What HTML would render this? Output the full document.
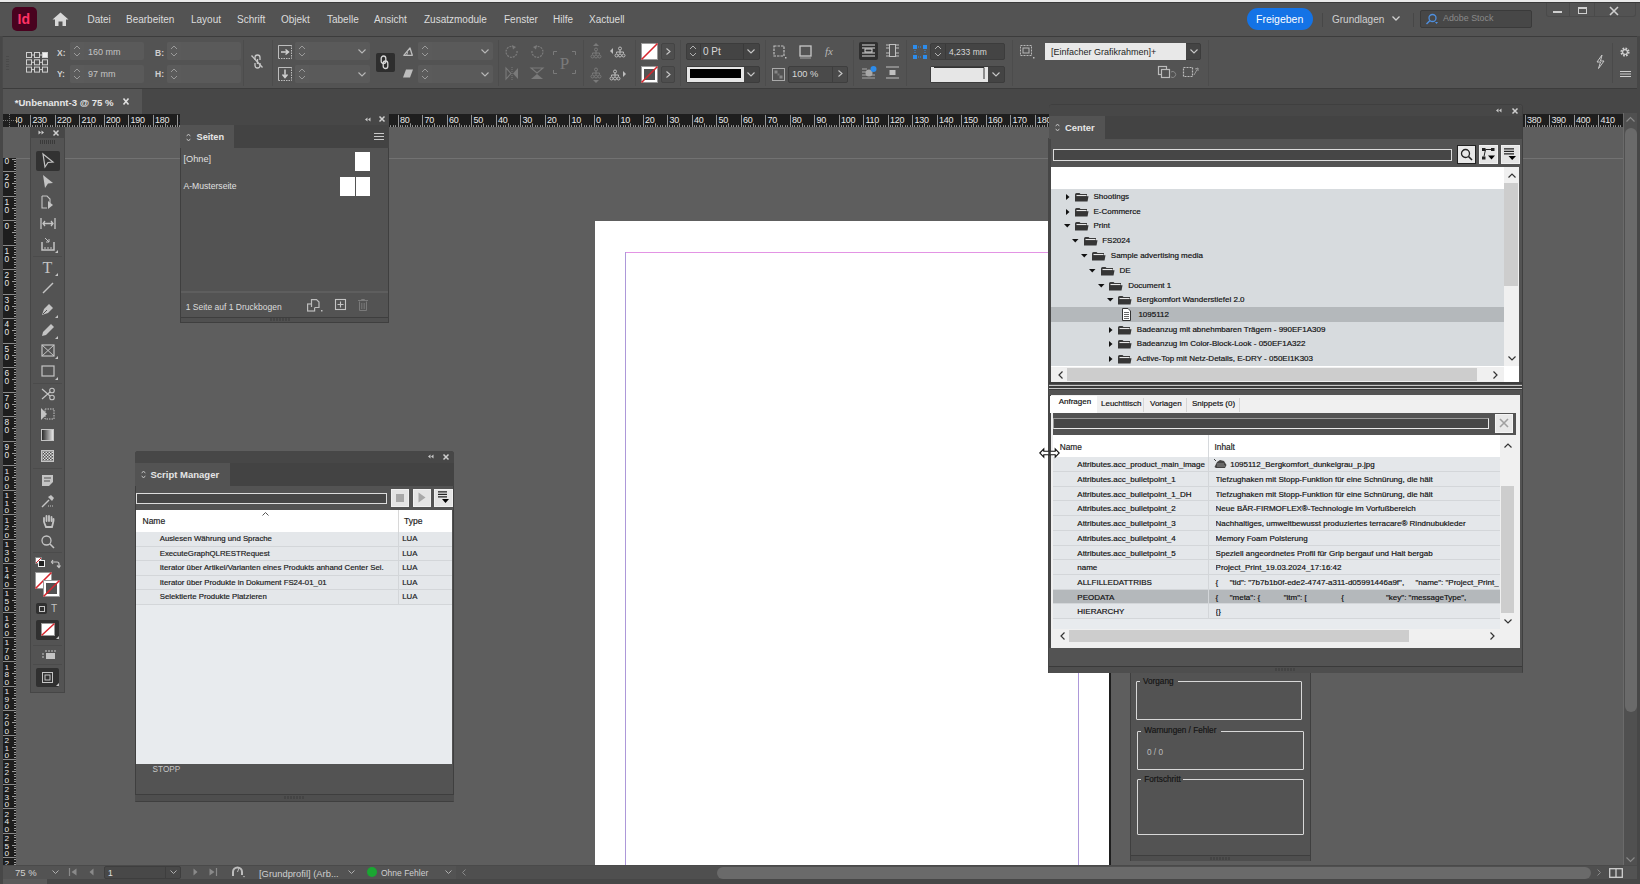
<!DOCTYPE html><html><head><meta charset="utf-8"><style>
*{box-sizing:border-box;margin:0;padding:0}
html,body{width:1640px;height:884px;overflow:hidden;background:#5e5e5e;font-family:"Liberation Sans",sans-serif;}
.ab{position:absolute}
.t{position:absolute;white-space:nowrap;line-height:1}
.dk{-webkit-text-stroke:0.18px currentColor}
svg{position:absolute;overflow:visible}
</style></head><body>
<div class="ab" style="left:0px;top:0px;width:1640px;height:2px;background:#e9e9e9;"></div>
<div class="ab" style="left:0px;top:2px;width:1640px;height:1px;background:#3a3a3a;"></div>
<div class="ab" style="left:0px;top:3px;width:1640px;height:33px;background:#535353;"></div>
<div class="ab" style="left:12px;top:7px;width:25px;height:24px;background:#49021f;border-radius:5px"></div>
<div class="t" style="left:17.5px;top:12px;font-size:14px;color:#ff3366;font-weight:bold;">Id</div>
<svg style="left:52px;top:12px;" width="17" height="15" viewBox="0 0 17 15"><path d="M8.5 0.5 L16.5 7.5 L14 7.5 L14 14 L10.5 14 L10.5 9.5 L6.5 9.5 L6.5 14 L3 14 L3 7.5 L0.5 7.5 Z" fill="#d8d8d8"/></svg>
<div class="t" style="left:87.5px;top:14.5px;font-size:10px;color:#dcdcdc;">Datei</div>
<div class="t" style="left:126px;top:14.5px;font-size:10px;color:#dcdcdc;">Bearbeiten</div>
<div class="t" style="left:191px;top:14.5px;font-size:10px;color:#dcdcdc;">Layout</div>
<div class="t" style="left:237px;top:14.5px;font-size:10px;color:#dcdcdc;">Schrift</div>
<div class="t" style="left:281px;top:14.5px;font-size:10px;color:#dcdcdc;">Objekt</div>
<div class="t" style="left:327px;top:14.5px;font-size:10px;color:#dcdcdc;">Tabelle</div>
<div class="t" style="left:374px;top:14.5px;font-size:10px;color:#dcdcdc;">Ansicht</div>
<div class="t" style="left:424px;top:14.5px;font-size:10px;color:#dcdcdc;">Zusatzmodule</div>
<div class="t" style="left:504px;top:14.5px;font-size:10px;color:#dcdcdc;">Fenster</div>
<div class="t" style="left:553px;top:14.5px;font-size:10px;color:#dcdcdc;">Hilfe</div>
<div class="t" style="left:589px;top:14.5px;font-size:10px;color:#dcdcdc;">Xactuell</div>
<div class="ab" style="left:1247px;top:8px;width:66px;height:22px;background:#1473e6;border-radius:11px"></div>
<div class="t" style="left:1256px;top:14px;font-size:10.5px;color:#ffffff;">Freigeben</div>
<div class="ab" style="left:1322px;top:13px;width:1px;height:14px;background:#474747;"></div>
<div class="t" style="left:1332px;top:14.5px;font-size:10px;color:#d0d0d0;">Grundlagen</div>
<svg style="left:1392px;top:16px;" width="8" height="5" viewBox="0 0 8 5"><path d="M0.5 0.5 L4 4 L7.5 0.5" stroke="#d0d0d0" stroke-width="1.3" fill="none"/></svg>
<div class="ab" style="left:1413px;top:13px;width:1px;height:14px;background:#474747;"></div>
<div class="ab" style="left:1420px;top:10px;width:112px;height:18px;background:#474747;border:1px solid #3a3a3a;border-radius:2px"></div>
<svg style="left:1425px;top:13px;" width="14" height="12" viewBox="0 0 14 12"><circle cx="7.5" cy="5" r="3.5" stroke="#4f8fde" stroke-width="1.3" fill="none"/><path d="M5 7.5 L1.5 11" stroke="#4f8fde" stroke-width="1.5"/><path d="M10 9 L13 9 L11.5 11 Z" fill="#4f8fde"/></svg>
<div class="t" style="left:1443px;top:14px;font-size:8.9px;color:#8a8a8a;">Adobe Stock</div>
<div class="ab" style="left:1546px;top:3px;width:90px;height:14px;background:#535353;border:1px solid #4a4a4a;border-top:none;border-radius:0 0 3px 3px"></div>
<div class="ab" style="left:1569px;top:3px;width:1px;height:14px;background:#4a4a4a;"></div>
<div class="ab" style="left:1594px;top:3px;width:1px;height:14px;background:#4a4a4a;"></div>
<div class="ab" style="left:1553px;top:11px;width:9px;height:2px;background:#cfcfcf;"></div>
<div class="ab" style="left:1578px;top:7px;width:9px;height:7px;background:transparent;border:1.5px solid #cfcfcf;border-top-width:2px"></div>
<svg style="left:1609px;top:6px;" width="10" height="10" viewBox="0 0 10 10"><path d="M1 1 L9 9 M9 1 L1 9" stroke="#cfcfcf" stroke-width="1.6"/></svg>
<div class="ab" style="left:0px;top:36px;width:1640px;height:53px;background:#474747;"></div>
<div class="ab" style="left:2px;top:36px;width:1635px;height:53px;background:#535353;border-top:1px solid #3c3c3c;border-left:1px solid #4a4a4a;border-bottom:1px solid #3c3c3c"></div>
<div class="ab" style="left:6px;top:56.0px;width:3px;height:1px;background:#4a4a4a;"></div>
<div class="ab" style="left:6px;top:58.6px;width:3px;height:1px;background:#4a4a4a;"></div>
<div class="ab" style="left:6px;top:61.2px;width:3px;height:1px;background:#4a4a4a;"></div>
<div class="ab" style="left:6px;top:63.8px;width:3px;height:1px;background:#4a4a4a;"></div>
<div class="ab" style="left:6px;top:66.4px;width:3px;height:1px;background:#4a4a4a;"></div>
<div class="ab" style="left:6px;top:69.0px;width:3px;height:1px;background:#4a4a4a;"></div>
<svg style="left:26px;top:52px;" width="22" height="22" viewBox="0 0 22 22"><rect x="0.5" y="0.5" width="5" height="5" fill="none" stroke="#cfcfcf" stroke-width="1"/><rect x="8.5" y="0.5" width="5" height="5" fill="none" stroke="#cfcfcf" stroke-width="1"/><rect x="16.5" y="0.5" width="5" height="5" fill="#f0f0f0" stroke="#cfcfcf" stroke-width="1"/><rect x="0.5" y="7.8" width="5" height="5" fill="none" stroke="#cfcfcf" stroke-width="1"/><rect x="8.5" y="7.8" width="5" height="5" fill="none" stroke="#cfcfcf" stroke-width="1"/><rect x="16.5" y="7.8" width="5" height="5" fill="none" stroke="#cfcfcf" stroke-width="1"/><rect x="0.5" y="15.1" width="5" height="5" fill="none" stroke="#cfcfcf" stroke-width="1"/><rect x="8.5" y="15.1" width="5" height="5" fill="none" stroke="#cfcfcf" stroke-width="1"/><rect x="16.5" y="15.1" width="5" height="5" fill="none" stroke="#cfcfcf" stroke-width="1"/><path d="M5.5 3 H8.5 M13.5 3 H16.5 M5.5 10.3 H8.5 M13.5 10.3 H16.5 M5.5 17.6 H8.5 M13.5 17.6 H16.5" stroke="#cfcfcf" stroke-width="1"/></svg>
<div class="t" style="left:57px;top:49px;font-size:8.5px;color:#cfcfcf;font-weight:bold">X:</div>
<div class="t" style="left:57px;top:70px;font-size:8.5px;color:#cfcfcf;font-weight:bold">Y:</div>
<div class="ab" style="left:69.5px;top:42px;width:74px;height:18px;background:#5a5a5a;border-radius:2px"></div>
<div class="ab" style="left:69.5px;top:42px;width:14px;height:18px;background:#5b5b5b;border-radius:2px 0 0 2px"></div>
<svg style="left:72.5px;top:45px;" width="8" height="12" viewBox="0 0 8 12"><path d="M1 4 L4 1 L7 4 M1 8 L4 11 L7 8" stroke="#9a9a9a" stroke-width="1" fill="none"/></svg>
<div class="ab" style="left:69.5px;top:65px;width:74px;height:18px;background:#5a5a5a;border-radius:2px"></div>
<div class="ab" style="left:69.5px;top:65px;width:14px;height:18px;background:#5b5b5b;border-radius:2px 0 0 2px"></div>
<svg style="left:72.5px;top:68px;" width="8" height="12" viewBox="0 0 8 12"><path d="M1 4 L4 1 L7 4 M1 8 L4 11 L7 8" stroke="#9a9a9a" stroke-width="1" fill="none"/></svg>
<div class="t" style="left:88px;top:47.5px;font-size:9px;color:#c4c4c4;">160 mm</div>
<div class="t" style="left:88px;top:69.5px;font-size:9px;color:#c4c4c4;">97 mm</div>
<div class="t" style="left:155px;top:49px;font-size:8.5px;color:#cfcfcf;font-weight:bold">B:</div>
<div class="t" style="left:155px;top:70px;font-size:8.5px;color:#cfcfcf;font-weight:bold">H:</div>
<div class="ab" style="left:167px;top:42px;width:74px;height:18px;background:#5a5a5a;border-radius:2px"></div>
<div class="ab" style="left:167px;top:42px;width:14px;height:18px;background:#5b5b5b;border-radius:2px 0 0 2px"></div>
<svg style="left:170px;top:45px;" width="8" height="12" viewBox="0 0 8 12"><path d="M1 4 L4 1 L7 4 M1 8 L4 11 L7 8" stroke="#9a9a9a" stroke-width="1" fill="none"/></svg>
<div class="ab" style="left:167px;top:65px;width:74px;height:18px;background:#5a5a5a;border-radius:2px"></div>
<div class="ab" style="left:167px;top:65px;width:14px;height:18px;background:#5b5b5b;border-radius:2px 0 0 2px"></div>
<svg style="left:170px;top:68px;" width="8" height="12" viewBox="0 0 8 12"><path d="M1 4 L4 1 L7 4 M1 8 L4 11 L7 8" stroke="#9a9a9a" stroke-width="1" fill="none"/></svg>
<div class="ab" style="left:243px;top:40px;width:1px;height:46px;background:#4c4c4c;"></div>
<svg style="left:250px;top:54px;" width="14" height="15" viewBox="0 0 14 15"><g fill="none" stroke="#c8c8c8" stroke-width="1.3"><path d="M5 6 V3.5 A2.5 2.5 0 0 1 10 3.5 V6"/><path d="M5 9 V11.5 A2.5 2.5 0 0 0 10 11.5 V9"/><path d="M7.5 5 V10"/></g><path d="M1.5 1.5 L12.5 13.5" stroke="#c8c8c8" stroke-width="1.3"/></svg>
<div class="ab" style="left:272px;top:40px;width:1px;height:46px;background:#4c4c4c;"></div>
<svg style="left:278px;top:45px;" width="14" height="14" viewBox="0 0 14 14"><rect x="0.5" y="0.5" width="13" height="13" fill="none" stroke="#bdbdbd" stroke-dasharray="1.5 1" /><path d="M0.5 0.5 H13.5 M0.5 0.5 V13.5" stroke="#bdbdbd"/><path d="M3 7 H10 M7.5 4.5 L10.5 7 L7.5 9.5" stroke="#d0d0d0" stroke-width="1.5" fill="none"/></svg>
<svg style="left:278px;top:67px;" width="14" height="14" viewBox="0 0 14 14"><rect x="0.5" y="0.5" width="13" height="13" fill="none" stroke="#bdbdbd" stroke-dasharray="1.5 1" /><path d="M0.5 0.5 H13.5 M0.5 0.5 V13.5" stroke="#bdbdbd"/><path d="M7 2.5 V10 M4.5 7.5 L7 10.5 L9.5 7.5" stroke="#d0d0d0" stroke-width="1.5" fill="none"/></svg>
<div class="ab" style="left:295px;top:42px;width:75px;height:18px;background:#5a5a5a;border-radius:2px"></div>
<div class="ab" style="left:295px;top:42px;width:14px;height:18px;background:#5b5b5b;border-radius:2px 0 0 2px"></div>
<svg style="left:298px;top:45px;" width="8" height="12" viewBox="0 0 8 12"><path d="M1 4 L4 1 L7 4 M1 8 L4 11 L7 8" stroke="#9a9a9a" stroke-width="1" fill="none"/></svg>
<svg style="left:358px;top:49px;" width="8" height="5" viewBox="0 0 8 5"><path d="M0.5 0.5 L4 4 L7.5 0.5" stroke="#b8b8b8" stroke-width="1.1" fill="none"/></svg>
<div class="ab" style="left:295px;top:65px;width:75px;height:18px;background:#5a5a5a;border-radius:2px"></div>
<div class="ab" style="left:295px;top:65px;width:14px;height:18px;background:#5b5b5b;border-radius:2px 0 0 2px"></div>
<svg style="left:298px;top:68px;" width="8" height="12" viewBox="0 0 8 12"><path d="M1 4 L4 1 L7 4 M1 8 L4 11 L7 8" stroke="#9a9a9a" stroke-width="1" fill="none"/></svg>
<svg style="left:358px;top:72px;" width="8" height="5" viewBox="0 0 8 5"><path d="M0.5 0.5 L4 4 L7.5 0.5" stroke="#b8b8b8" stroke-width="1.1" fill="none"/></svg>
<div class="ab" style="left:375.5px;top:53px;width:19px;height:19px;background:#2e2e2e;border-radius:2px"></div>
<svg style="left:380px;top:55px;" width="9" height="15" viewBox="0 0 9 15"><g fill="none" stroke="#d8d8d8" stroke-width="1.3"><rect x="1.2" y="1" width="4.6" height="7.5" rx="2.3"/><rect x="3.2" y="6" width="4.6" height="7.5" rx="2.3"/></g></svg>
<svg style="left:403px;top:46.5px;" width="10" height="9" viewBox="0 0 10 9"><path d="M0.8 8.3 L7 1 L9.3 8.3 Z" stroke="#bdbdbd" stroke-width="1.3" fill="none" stroke-linejoin="round"/><path d="M3.5 8.3 Q4.8 6.2 4.3 5" stroke="#bdbdbd" stroke-width="1" fill="none"/></svg>
<svg style="left:403px;top:69px;" width="10" height="9" viewBox="0 0 10 9"><path d="M3 0.5 H10 L7 8.5 H0 Z" fill="#bdbdbd"/></svg>
<div class="ab" style="left:418px;top:42px;width:75px;height:18px;background:#5a5a5a;border-radius:2px"></div>
<div class="ab" style="left:418px;top:42px;width:14px;height:18px;background:#5b5b5b;border-radius:2px 0 0 2px"></div>
<svg style="left:421px;top:45px;" width="8" height="12" viewBox="0 0 8 12"><path d="M1 4 L4 1 L7 4 M1 8 L4 11 L7 8" stroke="#9a9a9a" stroke-width="1" fill="none"/></svg>
<svg style="left:481px;top:49px;" width="8" height="5" viewBox="0 0 8 5"><path d="M0.5 0.5 L4 4 L7.5 0.5" stroke="#b8b8b8" stroke-width="1.1" fill="none"/></svg>
<div class="ab" style="left:418px;top:65px;width:75px;height:18px;background:#5a5a5a;border-radius:2px"></div>
<div class="ab" style="left:418px;top:65px;width:14px;height:18px;background:#5b5b5b;border-radius:2px 0 0 2px"></div>
<svg style="left:421px;top:68px;" width="8" height="12" viewBox="0 0 8 12"><path d="M1 4 L4 1 L7 4 M1 8 L4 11 L7 8" stroke="#9a9a9a" stroke-width="1" fill="none"/></svg>
<svg style="left:481px;top:72px;" width="8" height="5" viewBox="0 0 8 5"><path d="M0.5 0.5 L4 4 L7.5 0.5" stroke="#b8b8b8" stroke-width="1.1" fill="none"/></svg>
<div class="ab" style="left:497.5px;top:40px;width:1px;height:46px;background:#4c4c4c;"></div>
<svg style="left:505px;top:45px;" width="14" height="14" viewBox="0 0 14 14"><path d="M12 6 A5.5 5.5 0 1 1 8 1.5" stroke="#7a7a7a" stroke-width="1.3" fill="none" stroke-dasharray="2 1"/><path d="M7 0 L11 2 L8 4.5" fill="#7a7a7a"/></svg>
<svg style="left:530px;top:45px;" width="14" height="14" viewBox="0 0 14 14"><path d="M2 6 A5.5 5.5 0 1 0 6 1.5" stroke="#7a7a7a" stroke-width="1.3" fill="none" stroke-dasharray="2 1"/><path d="M7 0 L3 2 L6 4.5" fill="#7a7a7a"/></svg>
<svg style="left:505px;top:67px;" width="14" height="13" viewBox="0 0 14 13"><path d="M1 1 L6 6.5 L1 12 Z" fill="none" stroke="#7a7a7a" stroke-width="1.1"/><path d="M13 1 L8 6.5 L13 12 Z" fill="#7a7a7a"/><path d="M7 0 V13" stroke="#7a7a7a" stroke-dasharray="1 1"/></svg>
<svg style="left:530px;top:67px;" width="14" height="13" viewBox="0 0 14 13"><path d="M1 1 L13 1 L7 6 Z" fill="none" stroke="#7a7a7a" stroke-width="1.1"/><path d="M1 12 L13 12 L7 7 Z" fill="#7a7a7a"/></svg>
<svg style="left:553px;top:51px;" width="23" height="24" viewBox="0 0 23 24"><path d="M0.5 4 V0.5 H4 M19 0.5 H22.5 V4 M0.5 19 V22.5 H4 M19 22.5 H22.5 V19" stroke="#7a7a7a" fill="none"/><text x="11.5" y="18" font-family="Liberation Serif" font-size="17" fill="#7a7a7a" text-anchor="middle">P</text></svg>
<div class="ab" style="left:583px;top:40px;width:1px;height:46px;background:#4c4c4c;"></div>
<svg style="left:590px;top:43px;" width="12" height="16" viewBox="0 0 12 16"><path d="M6 0 L9 3 H3 Z" fill="#7a7a7a"/><g stroke="#7a7a7a" fill="none" stroke-width="1"><circle cx="6" cy="6.5" r="1.5"/><path d="M6 8 V10 M2.5 11.5 V10 H9.5 V11.5 M6 10 V11.5"/><circle cx="2.5" cy="13.5" r="1.5"/><circle cx="6" cy="13.5" r="1.5"/><circle cx="9.5" cy="13.5" r="1.5"/></g></svg>
<svg style="left:610px;top:46px;" width="16" height="12" viewBox="0 0 16 12"><path d="M0 5 L3 2 V8 Z" fill="#bdbdbd"/><g stroke="#bdbdbd" fill="none" stroke-width="1"><circle cx="10" cy="2.5" r="1.5"/><path d="M10 4 V6 M6.5 7.5 V6 H13.5 V7.5 M10 6 V7.5"/><circle cx="6.5" cy="9.5" r="1.5"/><circle cx="10" cy="9.5" r="1.5"/><circle cx="13.5" cy="9.5" r="1.5"/></g></svg>
<svg style="left:590px;top:67px;" width="12" height="16" viewBox="0 0 12 16"><path d="M6 16 L9 13 H3 Z" fill="#7a7a7a"/><g stroke="#7a7a7a" fill="none" stroke-width="1"><circle cx="6" cy="2.5" r="1.5"/><path d="M6 4 V6 M2.5 7.5 V6 H9.5 V7.5 M6 6 V7.5"/><circle cx="2.5" cy="9.5" r="1.5"/><circle cx="6" cy="9.5" r="1.5"/><circle cx="9.5" cy="9.5" r="1.5"/></g></svg>
<svg style="left:610px;top:69px;" width="16" height="12" viewBox="0 0 16 12"><path d="M16 5 L13 2 V8 Z" fill="#bdbdbd"/><g stroke="#bdbdbd" fill="none" stroke-width="1"><circle cx="5" cy="2.5" r="1.5"/><path d="M5 4 V6 M1.5 7.5 V6 H8.5 V7.5 M5 6 V7.5"/><circle cx="1.5" cy="9.5" r="1.5"/><circle cx="5" cy="9.5" r="1.5"/><circle cx="8.5" cy="9.5" r="1.5"/></g></svg>
<div class="ab" style="left:635px;top:40px;width:1px;height:46px;background:#4c4c4c;"></div>
<div class="ab" style="left:640.5px;top:42.5px;width:17px;height:17px;background:#ffffff;border:1px solid #9a9a9a"></div>
<svg style="left:640.5px;top:42.5px;" width="17" height="17" viewBox="0 0 17 17"><path d="M0.5 16.5 L16.5 0.5" stroke="#d7262e" stroke-width="1.6"/></svg>
<div class="ab" style="left:640.5px;top:65.5px;width:17px;height:17px;background:#ffffff;border:1px solid #9a9a9a"></div>
<div class="ab" style="left:643.5px;top:68.5px;width:11px;height:11px;background:#535353;"></div>
<svg style="left:640.5px;top:65.5px;" width="17" height="17" viewBox="0 0 17 17"><path d="M0.5 16.5 L16.5 0.5" stroke="#d7262e" stroke-width="1.6"/></svg>
<div class="ab" style="left:661px;top:42.5px;width:14px;height:17px;background:#4e4e4e;border:1px solid #444;border-radius:2px"></div>
<svg style="left:666px;top:48px;" width="5" height="7" viewBox="0 0 5 7"><path d="M0.5 0.5 L4 3.5 L0.5 6.5" stroke="#c8c8c8" stroke-width="1.1" fill="none"/></svg>
<div class="ab" style="left:661px;top:65.5px;width:14px;height:17px;background:#4e4e4e;border:1px solid #444;border-radius:2px"></div>
<svg style="left:666px;top:71px;" width="5" height="7" viewBox="0 0 5 7"><path d="M0.5 0.5 L4 3.5 L0.5 6.5" stroke="#c8c8c8" stroke-width="1.1" fill="none"/></svg>
<div class="ab" style="left:680px;top:40px;width:1px;height:46px;background:#4c4c4c;"></div>
<div class="ab" style="left:685.5px;top:42.5px;width:74px;height:17px;background:#444444;border:1px solid #3c3c3c;border-radius:2px"></div>
<div class="ab" style="left:700px;top:43.5px;width:1px;height:15px;background:#3a3a3a;"></div>
<div class="ab" style="left:743px;top:43.5px;width:1px;height:15px;background:#3a3a3a;"></div>
<svg style="left:689px;top:45px;" width="8" height="12" viewBox="0 0 8 12"><path d="M1 4 L4 1 L7 4 M1 8 L4 11 L7 8" stroke="#b0b0b0" stroke-width="1" fill="none"/></svg>
<div class="t" style="left:703px;top:46.5px;font-size:10px;color:#d8d8d8;">0 Pt</div>
<svg style="left:747px;top:49px;" width="8" height="5" viewBox="0 0 8 5"><path d="M0.5 0.5 L4 4 L7.5 0.5" stroke="#c8c8c8" stroke-width="1.1" fill="none"/></svg>
<div class="ab" style="left:685.5px;top:65.5px;width:74px;height:17px;background:#444444;border:1px solid #3c3c3c;border-radius:2px"></div>
<div class="ab" style="left:686.5px;top:66.5px;width:57px;height:15px;background:#e6e6e6;"></div>
<div class="ab" style="left:689.5px;top:69px;width:51px;height:9px;background:#000000;"></div>
<svg style="left:747px;top:72px;" width="8" height="5" viewBox="0 0 8 5"><path d="M0.5 0.5 L4 4 L7.5 0.5" stroke="#c8c8c8" stroke-width="1.1" fill="none"/></svg>
<div class="ab" style="left:765px;top:40px;width:1px;height:46px;background:#4c4c4c;"></div>
<svg style="left:773px;top:45px;" width="14" height="14" viewBox="0 0 14 14"><rect x="1" y="1" width="10" height="10" fill="none" stroke="#c0c0c0" stroke-width="1.2" stroke-dasharray="2.5 1"/><rect x="12" y="12" width="1.5" height="1.5" fill="#c0c0c0"/></svg>
<svg style="left:799px;top:45px;" width="13" height="14" viewBox="0 0 13 14"><rect x="1" y="1" width="11" height="10" fill="none" stroke="#c8c8c8" stroke-width="1.3"/><rect x="1" y="12" width="11" height="2" fill="#7a7a7a"/></svg>
<div class="t" style="left:825px;top:46px;font-size:11px;color:#b8b8b8;font-family:'Liberation Serif'"><i>fx</i></div>
<svg style="left:772px;top:68px;" width="13" height="13" viewBox="0 0 13 13"><rect x="0.5" y="0.5" width="12" height="12" fill="none" stroke="#aaa"/><rect x="2.5" y="2.5" width="3" height="3" fill="#888"/><rect x="7.5" y="7.5" width="3" height="3" fill="#888"/><rect x="5.5" y="5.5" width="2" height="2" fill="#777"/></svg>
<div class="ab" style="left:788px;top:65.5px;width:60px;height:17px;background:#4a4a4a;border:1px solid #3e3e3e;border-radius:2px"></div>
<div class="ab" style="left:832px;top:66.5px;width:1px;height:15px;background:#3e3e3e;"></div>
<div class="t" style="left:792px;top:69.5px;font-size:9.3px;color:#d8d8d8;">100 %</div>
<svg style="left:838px;top:70px;" width="5" height="7" viewBox="0 0 5 7"><path d="M0.5 0.5 L4 3.5 L0.5 6.5" stroke="#c8c8c8" stroke-width="1.1" fill="none"/></svg>
<div class="ab" style="left:853px;top:40px;width:1px;height:46px;background:#4c4c4c;"></div>
<div class="ab" style="left:859px;top:41.5px;width:19px;height:18px;background:#2f2f2f;border-radius:2px"></div>
<svg style="left:862px;top:44px;" width="13" height="13" viewBox="0 0 13 13"><path d="M0 1 H13 M0 4 H13 M0 9 H13 M0 12 H13" stroke="#d8d8d8" stroke-width="1.2"/><rect x="3" y="5" width="7" height="3" fill="none" stroke="#d8d8d8"/></svg>
<svg style="left:886px;top:44px;" width="13" height="13" viewBox="0 0 13 13"><path d="M0 1 H3 M10 1 H13 M0 4 H3 M10 4 H13 M0 9 H3 M10 9 H13 M0 12 H3 M10 12 H13" stroke="#c0c0c0" stroke-width="1.2"/><rect x="3.5" y="0.5" width="6" height="12" fill="none" stroke="#c0c0c0"/></svg>
<svg style="left:862px;top:66px;" width="16" height="14" viewBox="0 0 16 14"><path d="M0 3 H5 M0 6 H5 M0 9 H13 M0 12 H13" stroke="#a8a8a8" stroke-width="1.2"/><circle cx="7" cy="7" r="3.5" fill="#a8a8a8"/><circle cx="11.5" cy="3" r="3" fill="#2d8ceb"/></svg>
<svg style="left:886px;top:66px;" width="13" height="14" viewBox="0 0 13 14"><path d="M0 1 H13 M0 12 H13" stroke="#c0c0c0" stroke-width="1.2"/><rect x="3.5" y="4" width="6" height="5" fill="#c0c0c0"/></svg>
<div class="ab" style="left:906px;top:40px;width:1px;height:46px;background:#4c4c4c;"></div>
<svg style="left:913px;top:45px;" width="14" height="14" viewBox="0 0 14 14"><g fill="#2d8ceb"><rect x="0" y="0" width="4" height="4"/><rect x="10" y="0" width="4" height="4"/><rect x="0" y="10" width="4" height="4"/><rect x="10" y="10" width="4" height="4"/></g><path d="M2 5 V9 M12 5 V9 M5 2 H9 M5 12 H9" stroke="#2d8ceb" stroke-dasharray="1 1"/></svg>
<div class="ab" style="left:930px;top:42.5px;width:75px;height:17px;background:#444444;border:1px solid #3c3c3c;border-radius:2px"></div>
<div class="ab" style="left:945px;top:43.5px;width:1px;height:15px;background:#3a3a3a;"></div>
<svg style="left:934px;top:45px;" width="8" height="12" viewBox="0 0 8 12"><path d="M1 4 L4 1 L7 4 M1 8 L4 11 L7 8" stroke="#b0b0b0" stroke-width="1" fill="none"/></svg>
<div class="t" style="left:949px;top:47.5px;font-size:8.5px;color:#d8d8d8;">4,233 mm</div>
<div class="ab" style="left:930px;top:65.5px;width:75px;height:17px;background:#444444;border:1px solid #3c3c3c;border-radius:2px"></div>
<div class="ab" style="left:931px;top:66.5px;width:57px;height:15px;background:#e6e6e6;"></div>
<svg style="left:933px;top:67px;" width="53" height="12" viewBox="0 0 53 12"><path d="M1 0.5 H51 V12" stroke="#333" stroke-width="1" fill="none"/></svg>
<svg style="left:992px;top:72px;" width="8" height="5" viewBox="0 0 8 5"><path d="M0.5 0.5 L4 4 L7.5 0.5" stroke="#c8c8c8" stroke-width="1.1" fill="none"/></svg>
<div class="ab" style="left:1012px;top:40px;width:1px;height:46px;background:#4c4c4c;"></div>
<svg style="left:1020px;top:45px;" width="15" height="14" viewBox="0 0 15 14"><rect x="0.5" y="0.5" width="11" height="10" fill="none" stroke="#b8b8b8" stroke-dasharray="2 1"/><rect x="3" y="3" width="6" height="5" fill="none" stroke="#b8b8b8"/><rect x="13" y="12" width="1.5" height="1.5" fill="#b8b8b8"/></svg>
<div class="ab" style="left:1045px;top:42.5px;width:156px;height:17px;background:#444444;border:1px solid #3c3c3c;border-radius:2px"></div>
<div class="ab" style="left:1045px;top:42.5px;width:141px;height:17px;background:#e8e8e8;"></div>
<div class="t" style="left:1051px;top:47.5px;font-size:9px;color:#1e1e1e;">[Einfacher Grafikrahmen]+</div>
<svg style="left:1190px;top:49px;" width="8" height="5" viewBox="0 0 8 5"><path d="M0.5 0.5 L4 4 L7.5 0.5" stroke="#c8c8c8" stroke-width="1.1" fill="none"/></svg>
<svg style="left:1158px;top:66px;" width="18" height="14" viewBox="0 0 18 14"><rect x="0.5" y="0.5" width="8" height="8" fill="none" stroke="#bbb" stroke-width="1.2"/><rect x="3.5" y="3.5" width="8" height="8" fill="#535353" stroke="#bbb" stroke-width="1.2"/><path d="M13 6 A3 3 0 1 1 13 11" stroke="#888" fill="none"/></svg>
<svg style="left:1183px;top:66px;" width="16" height="13" viewBox="0 0 16 13"><rect x="0.5" y="1.5" width="9" height="9" fill="none" stroke="#bbb" stroke-width="1.2" stroke-dasharray="2 1"/><path d="M11 9 L15 2 M12 3 L15 2 L15 5" stroke="#999" fill="none"/></svg>
<div class="ab" style="left:1208px;top:40px;width:1px;height:46px;background:#4c4c4c;"></div>
<svg style="left:1596px;top:55px;" width="9" height="14" viewBox="0 0 9 14"><path d="M6 0 L1 7 H4.5 L2.5 13.5 L8 6 H4.5 Z" fill="none" stroke="#c8c8c8" stroke-width="1"/></svg>
<div class="ab" style="left:1612px;top:43px;width:1px;height:40px;background:#4a4a4a;"></div>
<svg style="left:1619px;top:46px;" width="12" height="12" viewBox="0 0 12 12"><circle cx="6" cy="6" r="3.5" fill="none" stroke="#cfcfcf" stroke-width="2.2" stroke-dasharray="1.6 1.15"/><circle cx="6" cy="6" r="2.4" fill="none" stroke="#cfcfcf" stroke-width="1.2"/></svg>
<svg style="left:1620px;top:71px;" width="11" height="7" viewBox="0 0 11 7"><path d="M0 0.5 H11 M0 3 H11 M0 5.5 H11" stroke="#cfcfcf" stroke-width="1"/></svg>
<div class="ab" style="left:0px;top:89px;width:1640px;height:25px;background:#474747;"></div>
<div class="ab" style="left:3px;top:89px;width:139px;height:25px;background:#555555;"></div>
<div class="t" style="left:14.7px;top:97.5px;font-size:9.6px;color:#e6e6e6;font-weight:bold">*Unbenannt-3 @ 75 %</div>
<svg style="left:123px;top:98px;" width="6" height="7" viewBox="0 0 6 7"><path d="M0.5 0.5 L5.5 6.5 M5.5 0.5 L0.5 6.5" stroke="#e0e0e0" stroke-width="1.6"/></svg>
<div class="ab" style="left:0px;top:113px;width:3px;height:771px;background:#474747;"></div>
<div class="ab" style="left:3px;top:127px;width:1621px;height:738px;background:#5e5e5e;"></div>
<div class="ab" style="left:16px;top:158px;width:1608px;height:1px;background:#727272;"></div>
<div class="ab" style="left:595px;top:221px;width:514px;height:644px;background:#ffffff;"></div>
<div class="ab" style="left:1109px;top:221px;width:2px;height:644px;background:#1e1e1e;"></div>
<div class="ab" style="left:625px;top:252px;width:453px;height:1px;background:#e394e4;"></div>
<div class="ab" style="left:625px;top:252px;width:1px;height:613px;background:#ad98d9;"></div>
<div class="ab" style="left:1078px;top:252px;width:1px;height:613px;background:#ad98d9;"></div>
<svg style="left:16px;top:114px;overflow:hidden" width="1608" height="13" viewBox="0 0 1608 14" preserveAspectRatio="none"><rect width="1608" height="14" fill="#1e1e1e"/><path d="M-9.5 1V14M14.5 1V14M39.5 1V14M63.5 1V14M88.5 1V14M112.5 1V14M137.5 1V14M161.5 1V14M186.5 1V14M210.5 1V14M235.5 1V14M259.5 1V14M284.5 1V14M308.5 1V14M333.5 1V14M357.5 1V14M382.5 1V14M406.5 1V14M431.5 1V14M455.5 1V14M480.5 1V14M504.5 1V14M529.5 1V14M553.5 1V14M578.5 1V14M602.5 1V14M627.5 1V14M651.5 1V14M676.5 1V14M700.5 1V14M725.5 1V14M749.5 1V14M774.5 1V14M798.5 1V14M823.5 1V14M847.5 1V14M872.5 1V14M896.5 1V14M921.5 1V14M945.5 1V14M970.5 1V14M994.5 1V14M1019.5 1V14M1043.5 1V14M1068.5 1V14M1092.5 1V14M1117.5 1V14M1141.5 1V14M1166.5 1V14M1190.5 1V14M1215.5 1V14M1239.5 1V14M1264.5 1V14M1288.5 1V14M1313.5 1V14M1337.5 1V14M1362.5 1V14M1386.5 1V14M1411.5 1V14M1435.5 1V14M1460.5 1V14M1484.5 1V14M1509.5 1V14M1533.5 1V14M1558.5 1V14M1582.5 1V14M1607.5 1V14" stroke="#9a9a9a"/><path d="M-7.5 12V14M-5.5 12V14M-2.5 12V14M-0.5 12V14M2.5 10V14M4.5 12V14M7.5 12V14M9.5 12V14M12.5 12V14M16.5 12V14M19.5 12V14M21.5 12V14M24.5 12V14M26.5 10V14M29.5 12V14M31.5 12V14M34.5 12V14M36.5 12V14M41.5 12V14M43.5 12V14M46.5 12V14M48.5 12V14M51.5 10V14M53.5 12V14M56.5 12V14M58.5 12V14M61.5 12V14M65.5 12V14M68.5 12V14M70.5 12V14M73.5 12V14M75.5 10V14M78.5 12V14M80.5 12V14M83.5 12V14M85.5 12V14M90.5 12V14M92.5 12V14M95.5 12V14M97.5 12V14M100.5 10V14M102.5 12V14M105.5 12V14M107.5 12V14M110.5 12V14M114.5 12V14M117.5 12V14M119.5 12V14M122.5 12V14M124.5 10V14M127.5 12V14M129.5 12V14M132.5 12V14M134.5 12V14M139.5 12V14M141.5 12V14M144.5 12V14M146.5 12V14M149.5 10V14M151.5 12V14M154.5 12V14M156.5 12V14M159.5 12V14M163.5 12V14M166.5 12V14M168.5 12V14M171.5 12V14M173.5 10V14M176.5 12V14M178.5 12V14M181.5 12V14M183.5 12V14M188.5 12V14M190.5 12V14M193.5 12V14M195.5 12V14M198.5 10V14M200.5 12V14M203.5 12V14M205.5 12V14M208.5 12V14M212.5 12V14M215.5 12V14M217.5 12V14M220.5 12V14M222.5 10V14M225.5 12V14M227.5 12V14M230.5 12V14M232.5 12V14M237.5 12V14M239.5 12V14M242.5 12V14M244.5 12V14M247.5 10V14M249.5 12V14M252.5 12V14M254.5 12V14M257.5 12V14M261.5 12V14M264.5 12V14M266.5 12V14M269.5 12V14M271.5 10V14M274.5 12V14M276.5 12V14M279.5 12V14M281.5 12V14M286.5 12V14M288.5 12V14M291.5 12V14M293.5 12V14M296.5 10V14M298.5 12V14M301.5 12V14M303.5 12V14M306.5 12V14M310.5 12V14M313.5 12V14M315.5 12V14M318.5 12V14M320.5 10V14M323.5 12V14M325.5 12V14M328.5 12V14M330.5 12V14M335.5 12V14M337.5 12V14M340.5 12V14M342.5 12V14M345.5 10V14M347.5 12V14M350.5 12V14M352.5 12V14M355.5 12V14M359.5 12V14M362.5 12V14M364.5 12V14M367.5 12V14M369.5 10V14M372.5 12V14M374.5 12V14M377.5 12V14M379.5 12V14M384.5 12V14M386.5 12V14M389.5 12V14M391.5 12V14M394.5 10V14M396.5 12V14M399.5 12V14M401.5 12V14M404.5 12V14M408.5 12V14M411.5 12V14M413.5 12V14M416.5 12V14M418.5 10V14M421.5 12V14M423.5 12V14M426.5 12V14M428.5 12V14M433.5 12V14M435.5 12V14M438.5 12V14M440.5 12V14M443.5 10V14M445.5 12V14M448.5 12V14M450.5 12V14M453.5 12V14M457.5 12V14M460.5 12V14M462.5 12V14M465.5 12V14M467.5 10V14M470.5 12V14M472.5 12V14M475.5 12V14M477.5 12V14M482.5 12V14M484.5 12V14M487.5 12V14M489.5 12V14M492.5 10V14M494.5 12V14M497.5 12V14M499.5 12V14M502.5 12V14M506.5 12V14M509.5 12V14M511.5 12V14M514.5 12V14M516.5 10V14M519.5 12V14M521.5 12V14M524.5 12V14M526.5 12V14M531.5 12V14M533.5 12V14M536.5 12V14M538.5 12V14M541.5 10V14M543.5 12V14M546.5 12V14M548.5 12V14M551.5 12V14M555.5 12V14M558.5 12V14M560.5 12V14M563.5 12V14M565.5 10V14M568.5 12V14M570.5 12V14M573.5 12V14M575.5 12V14M580.5 12V14M582.5 12V14M585.5 12V14M587.5 12V14M590.5 10V14M592.5 12V14M595.5 12V14M597.5 12V14M600.5 12V14M604.5 12V14M607.5 12V14M609.5 12V14M612.5 12V14M614.5 10V14M617.5 12V14M619.5 12V14M622.5 12V14M624.5 12V14M629.5 12V14M631.5 12V14M634.5 12V14M636.5 12V14M639.5 10V14M641.5 12V14M644.5 12V14M646.5 12V14M649.5 12V14M653.5 12V14M656.5 12V14M658.5 12V14M661.5 12V14M663.5 10V14M666.5 12V14M668.5 12V14M671.5 12V14M673.5 12V14M678.5 12V14M680.5 12V14M683.5 12V14M685.5 12V14M688.5 10V14M690.5 12V14M693.5 12V14M695.5 12V14M698.5 12V14M702.5 12V14M705.5 12V14M707.5 12V14M710.5 12V14M712.5 10V14M715.5 12V14M717.5 12V14M720.5 12V14M722.5 12V14M727.5 12V14M729.5 12V14M732.5 12V14M734.5 12V14M737.5 10V14M739.5 12V14M742.5 12V14M744.5 12V14M747.5 12V14M751.5 12V14M754.5 12V14M756.5 12V14M759.5 12V14M761.5 10V14M764.5 12V14M766.5 12V14M769.5 12V14M771.5 12V14M776.5 12V14M778.5 12V14M781.5 12V14M783.5 12V14M786.5 10V14M788.5 12V14M791.5 12V14M793.5 12V14M796.5 12V14M800.5 12V14M803.5 12V14M805.5 12V14M808.5 12V14M810.5 10V14M813.5 12V14M815.5 12V14M818.5 12V14M820.5 12V14M825.5 12V14M827.5 12V14M830.5 12V14M832.5 12V14M835.5 10V14M837.5 12V14M840.5 12V14M842.5 12V14M845.5 12V14M849.5 12V14M852.5 12V14M854.5 12V14M857.5 12V14M859.5 10V14M862.5 12V14M864.5 12V14M867.5 12V14M869.5 12V14M874.5 12V14M876.5 12V14M879.5 12V14M881.5 12V14M884.5 10V14M886.5 12V14M889.5 12V14M891.5 12V14M894.5 12V14M898.5 12V14M901.5 12V14M903.5 12V14M906.5 12V14M908.5 10V14M911.5 12V14M913.5 12V14M916.5 12V14M918.5 12V14M923.5 12V14M925.5 12V14M928.5 12V14M930.5 12V14M933.5 10V14M935.5 12V14M938.5 12V14M940.5 12V14M943.5 12V14M947.5 12V14M950.5 12V14M952.5 12V14M955.5 12V14M957.5 10V14M960.5 12V14M962.5 12V14M965.5 12V14M967.5 12V14M972.5 12V14M974.5 12V14M977.5 12V14M979.5 12V14M982.5 10V14M984.5 12V14M987.5 12V14M989.5 12V14M992.5 12V14M996.5 12V14M999.5 12V14M1001.5 12V14M1004.5 12V14M1006.5 10V14M1009.5 12V14M1011.5 12V14M1014.5 12V14M1016.5 12V14M1021.5 12V14M1023.5 12V14M1026.5 12V14M1028.5 12V14M1031.5 10V14M1033.5 12V14M1036.5 12V14M1038.5 12V14M1041.5 12V14M1045.5 12V14M1048.5 12V14M1050.5 12V14M1053.5 12V14M1055.5 10V14M1058.5 12V14M1060.5 12V14M1063.5 12V14M1065.5 12V14M1070.5 12V14M1072.5 12V14M1075.5 12V14M1077.5 12V14M1080.5 10V14M1082.5 12V14M1085.5 12V14M1087.5 12V14M1090.5 12V14M1094.5 12V14M1097.5 12V14M1099.5 12V14M1102.5 12V14M1104.5 10V14M1107.5 12V14M1109.5 12V14M1112.5 12V14M1114.5 12V14M1119.5 12V14M1121.5 12V14M1124.5 12V14M1126.5 12V14M1129.5 10V14M1131.5 12V14M1134.5 12V14M1136.5 12V14M1139.5 12V14M1143.5 12V14M1146.5 12V14M1148.5 12V14M1151.5 12V14M1153.5 10V14M1156.5 12V14M1158.5 12V14M1161.5 12V14M1163.5 12V14M1168.5 12V14M1170.5 12V14M1173.5 12V14M1175.5 12V14M1178.5 10V14M1180.5 12V14M1183.5 12V14M1185.5 12V14M1188.5 12V14M1192.5 12V14M1195.5 12V14M1197.5 12V14M1200.5 12V14M1202.5 10V14M1205.5 12V14M1207.5 12V14M1210.5 12V14M1212.5 12V14M1217.5 12V14M1219.5 12V14M1222.5 12V14M1224.5 12V14M1227.5 10V14M1229.5 12V14M1232.5 12V14M1234.5 12V14M1237.5 12V14M1241.5 12V14M1244.5 12V14M1246.5 12V14M1249.5 12V14M1251.5 10V14M1254.5 12V14M1256.5 12V14M1259.5 12V14M1261.5 12V14M1266.5 12V14M1268.5 12V14M1271.5 12V14M1273.5 12V14M1276.5 10V14M1278.5 12V14M1281.5 12V14M1283.5 12V14M1286.5 12V14M1290.5 12V14M1293.5 12V14M1295.5 12V14M1298.5 12V14M1300.5 10V14M1303.5 12V14M1305.5 12V14M1308.5 12V14M1310.5 12V14M1315.5 12V14M1317.5 12V14M1320.5 12V14M1322.5 12V14M1325.5 10V14M1327.5 12V14M1330.5 12V14M1332.5 12V14M1335.5 12V14M1339.5 12V14M1342.5 12V14M1344.5 12V14M1347.5 12V14M1349.5 10V14M1352.5 12V14M1354.5 12V14M1357.5 12V14M1359.5 12V14M1364.5 12V14M1366.5 12V14M1369.5 12V14M1371.5 12V14M1374.5 10V14M1376.5 12V14M1379.5 12V14M1381.5 12V14M1384.5 12V14M1388.5 12V14M1391.5 12V14M1393.5 12V14M1396.5 12V14M1398.5 10V14M1401.5 12V14M1403.5 12V14M1406.5 12V14M1408.5 12V14M1413.5 12V14M1415.5 12V14M1418.5 12V14M1420.5 12V14M1423.5 10V14M1425.5 12V14M1428.5 12V14M1430.5 12V14M1433.5 12V14M1437.5 12V14M1440.5 12V14M1442.5 12V14M1445.5 12V14M1447.5 10V14M1450.5 12V14M1452.5 12V14M1455.5 12V14M1457.5 12V14M1462.5 12V14M1464.5 12V14M1467.5 12V14M1469.5 12V14M1472.5 10V14M1474.5 12V14M1477.5 12V14M1479.5 12V14M1482.5 12V14M1486.5 12V14M1489.5 12V14M1491.5 12V14M1494.5 12V14M1496.5 10V14M1499.5 12V14M1501.5 12V14M1504.5 12V14M1506.5 12V14M1511.5 12V14M1513.5 12V14M1516.5 12V14M1518.5 12V14M1521.5 10V14M1523.5 12V14M1526.5 12V14M1528.5 12V14M1531.5 12V14M1535.5 12V14M1538.5 12V14M1540.5 12V14M1543.5 12V14M1545.5 10V14M1548.5 12V14M1550.5 12V14M1553.5 12V14M1555.5 12V14M1560.5 12V14M1562.5 12V14M1565.5 12V14M1567.5 12V14M1570.5 10V14M1572.5 12V14M1575.5 12V14M1577.5 12V14M1580.5 12V14M1584.5 12V14M1587.5 12V14M1589.5 12V14M1592.5 12V14M1594.5 10V14M1597.5 12V14M1599.5 12V14M1602.5 12V14M1604.5 12V14M1609.5 12V14M1611.5 12V14M1614.5 12V14M1616.5 12V14M1619.5 10V14M1621.5 12V14M1624.5 12V14M1626.5 12V14M1629.5 12V14" stroke="#9a9a9a" stroke-width="1"/><g font-size="9" fill="#e8e8e8" font-family="Liberation Sans" letter-spacing="-0.3"><text x="-8.0" y="9.3">240</text><text x="16.5" y="9.3">230</text><text x="41.0" y="9.3">220</text><text x="65.5" y="9.3">210</text><text x="90.0" y="9.3">200</text><text x="114.5" y="9.3">190</text><text x="139.0" y="9.3">180</text><text x="163.5" y="9.3">170</text><text x="188.0" y="9.3">160</text><text x="212.5" y="9.3">150</text><text x="237.0" y="9.3">140</text><text x="261.5" y="9.3">130</text><text x="286.0" y="9.3">120</text><text x="310.5" y="9.3">110</text><text x="335.0" y="9.3">100</text><text x="359.5" y="9.3">90</text><text x="384.0" y="9.3">80</text><text x="408.5" y="9.3">70</text><text x="433.0" y="9.3">60</text><text x="457.5" y="9.3">50</text><text x="482.0" y="9.3">40</text><text x="506.5" y="9.3">30</text><text x="531.0" y="9.3">20</text><text x="555.5" y="9.3">10</text><text x="580.0" y="9.3">0</text><text x="604.5" y="9.3">10</text><text x="629.0" y="9.3">20</text><text x="653.5" y="9.3">30</text><text x="678.0" y="9.3">40</text><text x="702.5" y="9.3">50</text><text x="727.0" y="9.3">60</text><text x="751.5" y="9.3">70</text><text x="776.0" y="9.3">80</text><text x="800.5" y="9.3">90</text><text x="825.0" y="9.3">100</text><text x="849.5" y="9.3">110</text><text x="874.0" y="9.3">120</text><text x="898.5" y="9.3">130</text><text x="923.0" y="9.3">140</text><text x="947.5" y="9.3">150</text><text x="972.0" y="9.3">160</text><text x="996.5" y="9.3">170</text><text x="1021.0" y="9.3">180</text><text x="1045.5" y="9.3">190</text><text x="1070.0" y="9.3">200</text><text x="1094.5" y="9.3">210</text><text x="1119.0" y="9.3">220</text><text x="1143.5" y="9.3">230</text><text x="1168.0" y="9.3">240</text><text x="1192.5" y="9.3">250</text><text x="1217.0" y="9.3">260</text><text x="1241.5" y="9.3">270</text><text x="1266.0" y="9.3">280</text><text x="1290.5" y="9.3">290</text><text x="1315.0" y="9.3">300</text><text x="1339.5" y="9.3">310</text><text x="1364.0" y="9.3">320</text><text x="1388.5" y="9.3">330</text><text x="1413.0" y="9.3">340</text><text x="1437.5" y="9.3">350</text><text x="1462.0" y="9.3">360</text><text x="1486.5" y="9.3">370</text><text x="1511.0" y="9.3">380</text><text x="1535.5" y="9.3">390</text><text x="1560.0" y="9.3">400</text><text x="1584.5" y="9.3">410</text><text x="1609.0" y="9.3">420</text></g></svg>
<div class="ab" style="left:3px;top:114px;width:13px;height:13px;background:#1e1e1e;"></div>
<svg style="left:3px;top:114px;" width="13" height="13" viewBox="0 0 13 13"><path d="M0 6.5 H13 M6.5 0 V14" stroke="#777" stroke-dasharray="1 1"/></svg>
<svg style="left:3px;top:158px;overflow:hidden" width="13" height="707" viewBox="0 0 13 707"><rect width="13" height="707" fill="#1e1e1e"/><path d="M0 -35.5H13M0 -10.5H13M0 13.5H13M0 38.5H13M0 62.5H13M0 87.5H13M0 111.5H13M0 136.5H13M0 160.5H13M0 185.5H13M0 209.5H13M0 234.5H13M0 258.5H13M0 283.5H13M0 307.5H13M0 332.5H13M0 356.5H13M0 381.5H13M0 405.5H13M0 430.5H13M0 454.5H13M0 479.5H13M0 503.5H13M0 528.5H13M0 552.5H13M0 577.5H13M0 601.5H13M0 626.5H13M0 650.5H13M0 675.5H13M0 699.5H13" stroke="#8a8a8a"/><path d="M11 -33.5H13M11 -30.5H13M11 -28.5H13M11 -25.5H13M9 -23.5H13M11 -20.5H13M11 -18.5H13M11 -15.5H13M11 -13.5H13M11 -8.5H13M11 -6.5H13M11 -3.5H13M11 -1.5H13M9 1.5H13M11 3.5H13M11 6.5H13M11 8.5H13M11 11.5H13M11 15.5H13M11 18.5H13M11 20.5H13M11 23.5H13M9 25.5H13M11 28.5H13M11 30.5H13M11 33.5H13M11 35.5H13M11 40.5H13M11 42.5H13M11 45.5H13M11 47.5H13M9 50.5H13M11 52.5H13M11 55.5H13M11 57.5H13M11 60.5H13M11 64.5H13M11 67.5H13M11 69.5H13M11 72.5H13M9 74.5H13M11 77.5H13M11 79.5H13M11 82.5H13M11 84.5H13M11 89.5H13M11 91.5H13M11 94.5H13M11 96.5H13M9 99.5H13M11 101.5H13M11 104.5H13M11 106.5H13M11 109.5H13M11 113.5H13M11 116.5H13M11 118.5H13M11 121.5H13M9 123.5H13M11 126.5H13M11 128.5H13M11 131.5H13M11 133.5H13M11 138.5H13M11 140.5H13M11 143.5H13M11 145.5H13M9 148.5H13M11 150.5H13M11 153.5H13M11 155.5H13M11 158.5H13M11 162.5H13M11 165.5H13M11 167.5H13M11 170.5H13M9 172.5H13M11 175.5H13M11 177.5H13M11 180.5H13M11 182.5H13M11 187.5H13M11 189.5H13M11 192.5H13M11 194.5H13M9 197.5H13M11 199.5H13M11 202.5H13M11 204.5H13M11 207.5H13M11 211.5H13M11 214.5H13M11 216.5H13M11 219.5H13M9 221.5H13M11 224.5H13M11 226.5H13M11 229.5H13M11 231.5H13M11 236.5H13M11 238.5H13M11 241.5H13M11 243.5H13M9 246.5H13M11 248.5H13M11 251.5H13M11 253.5H13M11 256.5H13M11 260.5H13M11 263.5H13M11 265.5H13M11 268.5H13M9 270.5H13M11 273.5H13M11 275.5H13M11 278.5H13M11 280.5H13M11 285.5H13M11 287.5H13M11 290.5H13M11 292.5H13M9 295.5H13M11 297.5H13M11 300.5H13M11 302.5H13M11 305.5H13M11 309.5H13M11 312.5H13M11 314.5H13M11 317.5H13M9 319.5H13M11 322.5H13M11 324.5H13M11 327.5H13M11 329.5H13M11 334.5H13M11 336.5H13M11 339.5H13M11 341.5H13M9 344.5H13M11 346.5H13M11 349.5H13M11 351.5H13M11 354.5H13M11 358.5H13M11 361.5H13M11 363.5H13M11 366.5H13M9 368.5H13M11 371.5H13M11 373.5H13M11 376.5H13M11 378.5H13M11 383.5H13M11 385.5H13M11 388.5H13M11 390.5H13M9 393.5H13M11 395.5H13M11 398.5H13M11 400.5H13M11 403.5H13M11 407.5H13M11 410.5H13M11 412.5H13M11 415.5H13M9 417.5H13M11 420.5H13M11 422.5H13M11 425.5H13M11 427.5H13M11 432.5H13M11 434.5H13M11 437.5H13M11 439.5H13M9 442.5H13M11 444.5H13M11 447.5H13M11 449.5H13M11 452.5H13M11 456.5H13M11 459.5H13M11 461.5H13M11 464.5H13M9 466.5H13M11 469.5H13M11 471.5H13M11 474.5H13M11 476.5H13M11 481.5H13M11 483.5H13M11 486.5H13M11 488.5H13M9 491.5H13M11 493.5H13M11 496.5H13M11 498.5H13M11 501.5H13M11 505.5H13M11 508.5H13M11 510.5H13M11 513.5H13M9 515.5H13M11 518.5H13M11 520.5H13M11 523.5H13M11 525.5H13M11 530.5H13M11 532.5H13M11 535.5H13M11 537.5H13M9 540.5H13M11 542.5H13M11 545.5H13M11 547.5H13M11 550.5H13M11 554.5H13M11 557.5H13M11 559.5H13M11 562.5H13M9 564.5H13M11 567.5H13M11 569.5H13M11 572.5H13M11 574.5H13M11 579.5H13M11 581.5H13M11 584.5H13M11 586.5H13M9 589.5H13M11 591.5H13M11 594.5H13M11 596.5H13M11 599.5H13M11 603.5H13M11 606.5H13M11 608.5H13M11 611.5H13M9 613.5H13M11 616.5H13M11 618.5H13M11 621.5H13M11 623.5H13M11 628.5H13M11 630.5H13M11 633.5H13M11 635.5H13M9 638.5H13M11 640.5H13M11 643.5H13M11 645.5H13M11 648.5H13M11 652.5H13M11 655.5H13M11 657.5H13M11 660.5H13M9 662.5H13M11 665.5H13M11 667.5H13M11 670.5H13M11 672.5H13M11 677.5H13M11 679.5H13M11 682.5H13M11 684.5H13M9 687.5H13M11 689.5H13M11 692.5H13M11 694.5H13M11 697.5H13M11 701.5H13M11 704.5H13M11 706.5H13M11 709.5H13M9 711.5H13M11 714.5H13M11 716.5H13M11 719.5H13M11 721.5H13" stroke="#9a9a9a" stroke-width="1"/><g font-size="8.3" fill="#e8e8e8" font-family="Liberation Sans"><text x="1.6" y="-27.0">4</text><text x="1.6" y="-18.8">0</text><text x="1.6" y="-2.5">3</text><text x="1.6" y="5.7">0</text><text x="1.6" y="22.0">2</text><text x="1.6" y="30.2">0</text><text x="1.6" y="46.5">1</text><text x="1.6" y="54.7">0</text><text x="1.6" y="71.0">0</text><text x="1.6" y="95.5">1</text><text x="1.6" y="103.7">0</text><text x="1.6" y="120.0">2</text><text x="1.6" y="128.2">0</text><text x="1.6" y="144.5">3</text><text x="1.6" y="152.7">0</text><text x="1.6" y="169.0">4</text><text x="1.6" y="177.2">0</text><text x="1.6" y="193.5">5</text><text x="1.6" y="201.7">0</text><text x="1.6" y="218.0">6</text><text x="1.6" y="226.2">0</text><text x="1.6" y="242.5">7</text><text x="1.6" y="250.7">0</text><text x="1.6" y="267.0">8</text><text x="1.6" y="275.2">0</text><text x="1.6" y="291.5">9</text><text x="1.6" y="299.7">0</text><text x="1.6" y="316.0" transform="translate(0 37.92) scale(1 0.88)">1</text><text x="1.6" y="323.3" transform="translate(0 38.80) scale(1 0.88)">0</text><text x="1.6" y="330.6" transform="translate(0 39.67) scale(1 0.88)">0</text><text x="1.6" y="340.5" transform="translate(0 40.86) scale(1 0.88)">1</text><text x="1.6" y="347.8" transform="translate(0 41.74) scale(1 0.88)">1</text><text x="1.6" y="355.1" transform="translate(0 42.61) scale(1 0.88)">0</text><text x="1.6" y="365.0" transform="translate(0 43.80) scale(1 0.88)">1</text><text x="1.6" y="372.3" transform="translate(0 44.68) scale(1 0.88)">2</text><text x="1.6" y="379.6" transform="translate(0 45.55) scale(1 0.88)">0</text><text x="1.6" y="389.5" transform="translate(0 46.74) scale(1 0.88)">1</text><text x="1.6" y="396.8" transform="translate(0 47.62) scale(1 0.88)">3</text><text x="1.6" y="404.1" transform="translate(0 48.49) scale(1 0.88)">0</text><text x="1.6" y="414.0" transform="translate(0 49.68) scale(1 0.88)">1</text><text x="1.6" y="421.3" transform="translate(0 50.56) scale(1 0.88)">4</text><text x="1.6" y="428.6" transform="translate(0 51.43) scale(1 0.88)">0</text><text x="1.6" y="438.5" transform="translate(0 52.62) scale(1 0.88)">1</text><text x="1.6" y="445.8" transform="translate(0 53.50) scale(1 0.88)">5</text><text x="1.6" y="453.1" transform="translate(0 54.37) scale(1 0.88)">0</text><text x="1.6" y="463.0" transform="translate(0 55.56) scale(1 0.88)">1</text><text x="1.6" y="470.3" transform="translate(0 56.44) scale(1 0.88)">6</text><text x="1.6" y="477.6" transform="translate(0 57.31) scale(1 0.88)">0</text><text x="1.6" y="487.5" transform="translate(0 58.50) scale(1 0.88)">1</text><text x="1.6" y="494.8" transform="translate(0 59.38) scale(1 0.88)">7</text><text x="1.6" y="502.1" transform="translate(0 60.25) scale(1 0.88)">0</text><text x="1.6" y="512.0" transform="translate(0 61.44) scale(1 0.88)">1</text><text x="1.6" y="519.3" transform="translate(0 62.32) scale(1 0.88)">8</text><text x="1.6" y="526.6" transform="translate(0 63.19) scale(1 0.88)">0</text><text x="1.6" y="536.5" transform="translate(0 64.38) scale(1 0.88)">1</text><text x="1.6" y="543.8" transform="translate(0 65.26) scale(1 0.88)">9</text><text x="1.6" y="551.1" transform="translate(0 66.13) scale(1 0.88)">0</text><text x="1.6" y="561.0" transform="translate(0 67.32) scale(1 0.88)">2</text><text x="1.6" y="568.3" transform="translate(0 68.20) scale(1 0.88)">0</text><text x="1.6" y="575.6" transform="translate(0 69.07) scale(1 0.88)">0</text><text x="1.6" y="585.5" transform="translate(0 70.26) scale(1 0.88)">2</text><text x="1.6" y="592.8" transform="translate(0 71.14) scale(1 0.88)">1</text><text x="1.6" y="600.1" transform="translate(0 72.01) scale(1 0.88)">0</text><text x="1.6" y="610.0" transform="translate(0 73.20) scale(1 0.88)">2</text><text x="1.6" y="617.3" transform="translate(0 74.08) scale(1 0.88)">2</text><text x="1.6" y="624.6" transform="translate(0 74.95) scale(1 0.88)">0</text><text x="1.6" y="634.5" transform="translate(0 76.14) scale(1 0.88)">2</text><text x="1.6" y="641.8" transform="translate(0 77.02) scale(1 0.88)">3</text><text x="1.6" y="649.1" transform="translate(0 77.89) scale(1 0.88)">0</text><text x="1.6" y="659.0" transform="translate(0 79.08) scale(1 0.88)">2</text><text x="1.6" y="666.3" transform="translate(0 79.96) scale(1 0.88)">4</text><text x="1.6" y="673.6" transform="translate(0 80.83) scale(1 0.88)">0</text><text x="1.6" y="683.5" transform="translate(0 82.02) scale(1 0.88)">2</text><text x="1.6" y="690.8" transform="translate(0 82.90) scale(1 0.88)">5</text><text x="1.6" y="698.1" transform="translate(0 83.77) scale(1 0.88)">0</text><text x="1.6" y="708.0" transform="translate(0 84.96) scale(1 0.88)">2</text><text x="1.6" y="715.3" transform="translate(0 85.84) scale(1 0.88)">6</text><text x="1.6" y="722.6" transform="translate(0 86.71) scale(1 0.88)">0</text></g></svg>
<div class="ab" style="left:1623px;top:113px;width:14px;height:752px;background:#505050;border-left:1px solid #6a6a6a"></div>
<div class="ab" style="left:1624.5px;top:128px;width:12px;height:584px;background:#6a6a6a;border-radius:6px"></div>
<svg style="left:1626px;top:117px;" width="9" height="5" viewBox="0 0 9 5"><path d="M0.5 4.5 L4.5 0.5 L8.5 4.5" stroke="#8a8a8a" stroke-width="1.1" fill="none"/></svg>
<svg style="left:1626px;top:857px;" width="9" height="5" viewBox="0 0 9 5"><path d="M0.5 0.5 L4.5 4.5 L8.5 0.5" stroke="#8a8a8a" stroke-width="1.1" fill="none"/></svg>
<div class="ab" style="left:1637px;top:88px;width:3px;height:796px;background:#474747;"></div>
<div class="ab" style="left:3px;top:865px;width:1634px;height:14px;background:#535353;border-top:1px solid #4a4a4a"></div>
<div class="ab" style="left:0px;top:879px;width:1640px;height:5px;background:#474747;"></div>
<div class="ab" style="left:3px;top:879px;width:44px;height:5px;background:#5a5a5a;"></div>
<div class="t" style="left:15px;top:868px;font-size:9.5px;color:#d0d0d0;">75 %</div>
<svg style="left:52px;top:870px;" width="7" height="4" viewBox="0 0 7 4"><path d="M0.5 0.5 L3.5 3.5 L6.5 0.5" stroke="#b0b0b0" stroke-width="1" fill="none"/></svg>
<svg style="left:69px;top:868px;" width="8" height="8" viewBox="0 0 8 8"><path d="M0.5 0 V8" stroke="#8a8a8a" stroke-width="1.2"/><path d="M7.5 0.5 L2.5 4 L7.5 7.5 Z" fill="#8a8a8a"/></svg>
<svg style="left:89px;top:868px;" width="5" height="8" viewBox="0 0 5 8"><path d="M4.5 0.5 L0.5 4 L4.5 7.5 Z" fill="#8a8a8a"/></svg>
<div class="ab" style="left:104px;top:866px;width:77px;height:13px;background:#484848;border:1px solid #3e3e3e;border-radius:2px"></div>
<div class="ab" style="left:165px;top:867px;width:1px;height:11px;background:#3e3e3e;"></div>
<div class="t" style="left:108px;top:869px;font-size:8.5px;color:#e0e0e0;">1</div>
<svg style="left:170px;top:870px;" width="7" height="4" viewBox="0 0 7 4"><path d="M0.5 0.5 L3.5 3.5 L6.5 0.5" stroke="#b0b0b0" stroke-width="1" fill="none"/></svg>
<svg style="left:193px;top:868px;" width="5" height="8" viewBox="0 0 5 8"><path d="M0.5 0.5 L4.5 4 L0.5 7.5 Z" fill="#8a8a8a"/></svg>
<svg style="left:209px;top:868px;" width="8" height="8" viewBox="0 0 8 8"><path d="M7.5 0 V8" stroke="#8a8a8a" stroke-width="1.2"/><path d="M0.5 0.5 L5.5 4 L0.5 7.5 Z" fill="#8a8a8a"/></svg>
<svg style="left:231px;top:866px;" width="14" height="11" viewBox="0 0 14 11"><path d="M2 10 V6 A4.5 4.5 0 0 1 11 6 V9" stroke="#bdbdbd" stroke-width="2" fill="none"/><path d="M6.5 6 L8 2" stroke="#bdbdbd" stroke-width="1"/><path d="M12 10 L14 10 L13 11.5 Z" fill="#bdbdbd"/></svg>
<div class="t" style="left:259px;top:868.5px;font-size:9.4px;color:#d0d0d0;">[Grundprofil] (Arb...</div>
<svg style="left:348px;top:870px;" width="7" height="4" viewBox="0 0 7 4"><path d="M0.5 0.5 L3.5 3.5 L6.5 0.5" stroke="#b0b0b0" stroke-width="1" fill="none"/></svg>
<div class="ab" style="left:367px;top:867px;width:10px;height:10px;background:#1aa632;border-radius:50%"></div>
<div class="t" style="left:381px;top:869px;font-size:8.5px;color:#d0d0d0;">Ohne Fehler</div>
<svg style="left:445px;top:870px;" width="7" height="4" viewBox="0 0 7 4"><path d="M0.5 0.5 L3.5 3.5 L6.5 0.5" stroke="#b0b0b0" stroke-width="1" fill="none"/></svg>
<div class="ab" style="left:456px;top:866px;width:1167px;height:13px;background:#4f4f4f;"></div>
<svg style="left:462px;top:869px;" width="4" height="7" viewBox="0 0 4 7"><path d="M3.5 0.5 L0.5 3.5 L3.5 6.5" stroke="#8a8a8a" stroke-width="1" fill="none"/></svg>
<div class="ab" style="left:717px;top:866.5px;width:874px;height:12px;background:#6a6a6a;border-radius:6px"></div>
<svg style="left:1597px;top:869px;" width="4" height="7" viewBox="0 0 4 7"><path d="M0.5 0.5 L3.5 3.5 L0.5 6.5" stroke="#8a8a8a" stroke-width="1" fill="none"/></svg>
<svg style="left:1609px;top:868px;" width="14" height="10" viewBox="0 0 14 10"><rect x="0.7" y="0.7" width="12.6" height="8.6" fill="none" stroke="#d0d0d0" stroke-width="1.3"/><path d="M7 0.7 V9.3" stroke="#d0d0d0" stroke-width="1.3"/></svg>
<div class="ab" style="left:30px;top:127px;width:35px;height:566px;background:#535353;border:1px solid #464646"></div>
<div class="ab" style="left:30px;top:127px;width:35px;height:11px;background:#474747;"></div>
<svg style="left:38px;top:130px;" width="7" height="5" viewBox="0 0 7 5"><path d="M0.5 0.5 L3 2.5 L0.5 4.5 Z M3.5 0.5 L6 2.5 L3.5 4.5 Z" fill="#cfcfcf"/></svg>
<svg style="left:53px;top:129.5px;" width="6" height="6" viewBox="0 0 6 6"><path d="M0.5 0.5 L5.5 5.5 M5.5 0.5 L0.5 5.5" stroke="#cfcfcf" stroke-width="1.5"/></svg>
<svg style="left:40px;top:140px;" width="15" height="4" viewBox="0 0 15 4"><path d="M0.5 0V4M2.5 0V4M4.5 0V4M6.5 0V4M8.5 0V4M10.5 0V4M12.5 0V4M14.5 0V4" stroke="#3a3a3a"/></svg>
<div class="ab" style="left:36px;top:151px;width:24px;height:20px;background:#323232;border-radius:2px"></div>
<svg style="left:41.5px;top:153.0px;" width="12" height="15" viewBox="0 0 12 15"><path d="M1 1 L11 9 L6 9.5 L3 14 Z" fill="none" stroke="#c4c4c4" stroke-width="1.2"/></svg>
<svg style="left:41.5px;top:174.0px;" width="12" height="15" viewBox="0 0 12 15"><path d="M1 1 L11 9 L6 9.5 L3 14 Z" fill="#c4c4c4"/></svg>
<svg style="left:41.0px;top:194.5px;" width="13" height="15" viewBox="0 0 13 15"><path d="M1 1 H6 L9 4 V8 M1 1 V13 H6" fill="none" stroke="#c4c4c4" stroke-width="1.1"/><path d="M7 6 L12 10 L7 14 Z" fill="#c4c4c4"/></svg>
<svg style="left:39.5px;top:217.5px;" width="16" height="11" viewBox="0 0 16 11"><path d="M1 0 V11 M15 0 V11 M3 5.5 H13 M5 3 L3 5.5 L5 8 M11 3 L13 5.5 L11 8" fill="none" stroke="#c4c4c4" stroke-width="1.3"/></svg>
<svg style="left:40.5px;top:237.0px;" width="14" height="14" viewBox="0 0 14 14"><path d="M1 5 V13 H13 V5" fill="none" stroke="#c4c4c4" stroke-width="1.5"/><path d="M4 1 L8 5 M8 2 V5 H5" stroke="#c4c4c4" fill="none"/><path d="M4 10 V12 M7 10 V12 M10 10 V12" stroke="#c4c4c4"/></svg>
<svg style="left:54.5px;top:250px;" width="3" height="3" viewBox="0 0 3 3"><path d="M3 0 V3 H0 Z" fill="#c4c4c4"/></svg>
<div class="ab" style="left:33px;top:256px;width:29px;height:1px;background:#4b4b4b;"></div>
<svg style="left:41.0px;top:260.0px;" width="13" height="14" viewBox="0 0 13 14"><text x="6.5" y="13" font-family="Liberation Serif" font-size="16" fill="#c4c4c4" text-anchor="middle">T</text></svg>
<svg style="left:54.5px;top:273px;" width="3" height="3" viewBox="0 0 3 3"><path d="M3 0 V3 H0 Z" fill="#c4c4c4"/></svg>
<svg style="left:41.5px;top:282.0px;" width="12" height="12" viewBox="0 0 12 12"><path d="M1 11 L11 1" stroke="#c4c4c4" stroke-width="1.4"/></svg>
<svg style="left:41.0px;top:302.0px;" width="13" height="14" viewBox="0 0 13 14"><path d="M1 13 L3 7 L8 2 L12 6 L7 11 Z" fill="#c4c4c4"/><path d="M2 12 L6 8" stroke="#535353"/></svg>
<svg style="left:54.5px;top:315px;" width="3" height="3" viewBox="0 0 3 3"><path d="M3 0 V3 H0 Z" fill="#c4c4c4"/></svg>
<svg style="left:41.0px;top:323.0px;" width="13" height="14" viewBox="0 0 13 14"><path d="M1 13 L2 9 L10 1 L13 4 L5 12 Z" fill="#c4c4c4"/></svg>
<svg style="left:54.5px;top:336px;" width="3" height="3" viewBox="0 0 3 3"><path d="M3 0 V3 H0 Z" fill="#c4c4c4"/></svg>
<svg style="left:40.5px;top:343.5px;" width="14" height="13" viewBox="0 0 14 13"><rect x="1" y="1" width="12" height="11" fill="none" stroke="#c4c4c4" stroke-width="1.2"/><path d="M1 1 L13 12 M13 1 L1 12" stroke="#c4c4c4"/></svg>
<svg style="left:54.5px;top:356px;" width="3" height="3" viewBox="0 0 3 3"><path d="M3 0 V3 H0 Z" fill="#c4c4c4"/></svg>
<svg style="left:40.5px;top:365.0px;" width="14" height="12" viewBox="0 0 14 12"><rect x="1" y="1" width="12" height="10" fill="none" stroke="#c4c4c4" stroke-width="1.2"/></svg>
<svg style="left:54.5px;top:377px;" width="3" height="3" viewBox="0 0 3 3"><path d="M3 0 V3 H0 Z" fill="#c4c4c4"/></svg>
<div class="ab" style="left:33px;top:383px;width:29px;height:1px;background:#4b4b4b;"></div>
<svg style="left:40.5px;top:388.0px;" width="14" height="12" viewBox="0 0 14 12"><circle cx="11" cy="2.5" r="2.3" fill="none" stroke="#c4c4c4" stroke-width="1.1"/><circle cx="11" cy="9.5" r="2.3" fill="none" stroke="#c4c4c4" stroke-width="1.1"/><path d="M1 1 L9 8 M1 11 L9 4" stroke="#c4c4c4" stroke-width="1.2"/></svg>
<svg style="left:40.0px;top:407.0px;" width="15" height="14" viewBox="0 0 15 14"><path d="M1 1 L7 7 L1 13 Z" fill="#c4c4c4"/><rect x="5" y="2" width="9" height="10" fill="none" stroke="#c4c4c4" stroke-dasharray="1.5 1"/></svg>
<svg style="left:41.0px;top:429.0px;" width="13" height="12" viewBox="0 0 13 12"><defs><linearGradient id="gr"><stop offset="0" stop-color="#222"/><stop offset="1" stop-color="#eee"/></linearGradient></defs><rect x="0.5" y="0.5" width="12" height="11" fill="url(#gr)" stroke="#c4c4c4"/></svg>
<svg style="left:41.0px;top:450.0px;" width="13" height="12" viewBox="0 0 13 12"><defs><pattern id="ck" width="3" height="3" patternUnits="userSpaceOnUse"><rect width="1.5" height="1.5" fill="#ddd"/><rect x="1.5" y="1.5" width="1.5" height="1.5" fill="#ddd"/></pattern></defs><rect x="0.5" y="0.5" width="12" height="11" fill="url(#ck)" stroke="#c4c4c4"/></svg>
<div class="ab" style="left:33px;top:468px;width:29px;height:1px;background:#4b4b4b;"></div>
<svg style="left:41.0px;top:473.5px;" width="13" height="13" viewBox="0 0 13 13"><path d="M1 1 H12 V8 L8 12 H1 Z" fill="#c4c4c4"/><path d="M3 4 H10 M3 7 H9" stroke="#535353"/></svg>
<svg style="left:40.5px;top:494.0px;" width="14" height="14" viewBox="0 0 14 14"><path d="M1 13 L8 6" stroke="#c4c4c4" stroke-width="1.5"/><path d="M7 3 L10 1 L13 4 L11 7 Z" fill="#c4c4c4"/><path d="M7 12 H13" stroke="#c4c4c4" stroke-dasharray="1 1"/></svg>
<svg style="left:40.5px;top:514.0px;" width="14" height="14" viewBox="0 0 14 14"><path d="M3 8 V4 M5.5 7 V2 M8 7 V2 M10.5 7 V3 M3 8 L5 13 H11 L12.5 7 V5" stroke="#c4c4c4" stroke-width="1.8" fill="none" stroke-linecap="round"/></svg>
<svg style="left:40.5px;top:535.0px;" width="14" height="14" viewBox="0 0 14 14"><circle cx="5.5" cy="5.5" r="4.5" fill="none" stroke="#c4c4c4" stroke-width="1.3"/><path d="M9 9 L13 13" stroke="#c4c4c4" stroke-width="1.6"/></svg>
<div class="ab" style="left:33px;top:552px;width:29px;height:1px;background:#4b4b4b;"></div>
<svg style="left:35px;top:557px;" width="10" height="10" viewBox="0 0 10 10"><rect x="0.5" y="0.5" width="6" height="6" fill="#fff" stroke="#888"/><rect x="3.5" y="3.5" width="6" height="6" fill="#222" stroke="#eee"/><path d="M1 6 L6 1" stroke="#d7262e"/></svg>
<svg style="left:51px;top:559px;" width="9" height="9" viewBox="0 0 9 9"><path d="M1 3 H6 A2 2 0 0 1 8 5 V8 M2 1 L0.5 3 L2 5 M6 6.5 L8 8.5 L9.5 6.5" stroke="#c4c4c4" stroke-width="1.2" fill="none"/></svg>
<div class="ab" style="left:35px;top:572px;width:17px;height:17px;background:#ffffff;border:1px solid #999"></div>
<svg style="left:35px;top:572px;" width="17" height="17" viewBox="0 0 17 17"><path d="M0.5 16.5 L16.5 0.5" stroke="#d7262e" stroke-width="1.6"/></svg>
<div class="ab" style="left:43px;top:580px;width:17px;height:17px;background:#ffffff;border:1px solid #999"></div>
<div class="ab" style="left:46px;top:583px;width:11px;height:11px;background:#535353;"></div>
<svg style="left:43px;top:580px;" width="17" height="17" viewBox="0 0 17 17"><path d="M0.5 16.5 L16.5 0.5" stroke="#d7262e" stroke-width="1.6"/></svg>
<div class="ab" style="left:36px;top:603px;width:11px;height:11px;background:#303030;border-radius:2px"></div>
<div class="ab" style="left:38.5px;top:605.5px;width:6px;height:6px;background:transparent;border:1px solid #c4c4c4"></div>
<div class="t" style="left:51px;top:604px;font-size:10px;color:#c4c4c4;font-family:"Liberation Serif";font-weight:bold">T</div>
<div class="ab" style="left:36px;top:620px;width:23px;height:20px;background:#303030;border-radius:2px"></div>
<div class="ab" style="left:41px;top:623px;width:14px;height:13px;background:#ffffff;border:1px solid #999"></div>
<svg style="left:41px;top:623px;" width="14" height="13" viewBox="0 0 14 13"><path d="M0.5 12.5 L13.5 0.5" stroke="#d7262e" stroke-width="1.5"/></svg>
<svg style="left:56px;top:636px;" width="3" height="3" viewBox="0 0 3 3"><path d="M3 0 V3 H0 Z" fill="#c4c4c4"/></svg>
<div class="ab" style="left:33px;top:645px;width:29px;height:1px;background:#4b4b4b;"></div>
<svg style="left:42px;top:649px;" width="13" height="12" viewBox="0 0 13 12"><rect x="4" y="4" width="9" height="6" fill="#c4c4c4"/><path d="M4 1 V3 M7 1 V3 M10 1 V3 M13 1 V3 M0 5 H2 M0 8 H2" stroke="#c4c4c4"/></svg>
<div class="ab" style="left:33px;top:664px;width:29px;height:1px;background:#4b4b4b;"></div>
<div class="ab" style="left:36px;top:668px;width:23px;height:19px;background:#303030;border-radius:2px"></div>
<svg style="left:42px;top:672px;" width="11" height="11" viewBox="0 0 11 11"><rect x="0.5" y="0.5" width="10" height="10" fill="none" stroke="#c4c4c4"/><rect x="3" y="3" width="5" height="5" fill="none" stroke="#c4c4c4"/></svg>
<svg style="left:56px;top:683px;" width="3" height="3" viewBox="0 0 3 3"><path d="M3 0 V3 H0 Z" fill="#c4c4c4"/></svg>
<div class="ab" style="left:180px;top:113px;width:209px;height:210px;background:#535353;border:1px solid #3f3f3f"></div>
<div class="ab" style="left:180px;top:113px;width:209px;height:11.5px;background:#474747;"></div>
<div class="ab" style="left:180px;top:124.5px;width:209px;height:23.5px;background:#434343;"></div>
<div class="ab" style="left:180px;top:124.5px;width:54px;height:23.5px;background:#535353;"></div>
<svg style="left:364px;top:117px;" width="7" height="5" viewBox="0 0 7 5"><path d="M3.5 0.5 L1 2.5 L3.5 4.5 Z M6.5 0.5 L4 2.5 L6.5 4.5 Z" fill="#c8c8c8"/></svg>
<svg style="left:379px;top:116px;" width="6" height="6" viewBox="0 0 6 6"><path d="M0.5 0.5 L5.5 5.5 M5.5 0.5 L0.5 5.5" stroke="#cfcfcf" stroke-width="1.5"/></svg>
<svg style="left:186px;top:132.5px;" width="5" height="9" viewBox="0 0 5 9"><path d="M0.7 3.2 L2.5 1 L4.3 3.2 M0.7 5.8 L2.5 8 L4.3 5.8" stroke="#c8c8c8" stroke-width="0.9" fill="none"/></svg>
<div class="t" style="left:196.5px;top:133px;font-size:9.2px;color:#e6e6e6;font-weight:bold">Seiten</div>
<svg style="left:374px;top:133px;" width="10" height="7" viewBox="0 0 10 7"><path d="M0 0.5 H10 M0 3.5 H10 M0 6.5 H10" stroke="#c8c8c8" stroke-width="1"/></svg>
<div class="t" style="left:183.5px;top:155px;font-size:9.2px;color:#e0e0e0;">[Ohne]</div>
<div class="ab" style="left:355px;top:152px;width:15px;height:19px;background:#ffffff;"></div>
<div class="t" style="left:183.5px;top:182px;font-size:8.6px;color:#e0e0e0;">A-Musterseite</div>
<div class="ab" style="left:340px;top:177px;width:14.5px;height:19px;background:#ffffff;"></div>
<div class="ab" style="left:355.5px;top:177px;width:14.5px;height:19px;background:#ffffff;"></div>
<div class="ab" style="left:181px;top:291px;width:207px;height:2px;background:#5e5e5e;"></div>
<div class="ab" style="left:181px;top:294px;width:207px;height:1px;background:#4c4c4c;"></div>
<div class="ab" style="left:181px;top:293px;width:207px;height:23px;background:#535353;"></div>
<div class="t" style="left:185.7px;top:303px;font-size:8.5px;color:#dcdcdc;">1 Seite auf 1 Druckbogen</div>
<svg style="left:307px;top:299px;" width="16" height="13" viewBox="0 0 16 13"><rect x="0.6" y="5" width="7" height="7" fill="none" stroke="#bdbdbd" stroke-width="1.2"/><path d="M4.5 8 V0.6 H9.5 L12 3 V8.5 H8" fill="#535353" stroke="#bdbdbd" stroke-width="1.2"/><rect x="14" y="11" width="1.5" height="1.5" fill="#bdbdbd"/></svg>
<svg style="left:335px;top:299px;" width="11" height="11" viewBox="0 0 11 11"><rect x="0.5" y="0.5" width="10" height="10" fill="none" stroke="#c4c4c4" stroke-width="1.1"/><path d="M5.5 2.5 V8.5 M2.5 5.5 H8.5" stroke="#c4c4c4" stroke-width="1.1"/></svg>
<svg style="left:358px;top:299px;" width="10" height="12" viewBox="0 0 10 12"><path d="M0 1.5 H10 M3.5 1.5 V0.5 H6.5 V1.5 M1.5 2.5 V11.5 H8.5 V2.5 M3.8 4 V10 M6.2 4 V10" stroke="#7a7a7a" fill="none" stroke-width="1"/></svg>
<div class="ab" style="left:181px;top:316.5px;width:207px;height:1px;background:#3e3e3e;"></div>
<div class="ab" style="left:181px;top:317.5px;width:207px;height:4.5px;background:#505050;"></div>
<svg style="left:270px;top:318px;" width="21" height="3" viewBox="0 0 21 3"><path d="M1 0V3M4 0V3M7 0V3M10 0V3M13 0V3M16 0V3M19 0V3" stroke="#3a3a3a"/></svg>
<div class="ab" style="left:134.5px;top:450.5px;width:319.5px;height:351px;background:#535353;border:1px solid #3f3f3f;border-radius:3px 3px 0 0"></div>
<div class="ab" style="left:135px;top:451px;width:318.5px;height:11.5px;background:#474747;border-radius:3px 3px 0 0"></div>
<div class="ab" style="left:135px;top:462.5px;width:318.5px;height:23.5px;background:#434343;"></div>
<div class="ab" style="left:135px;top:462.5px;width:95px;height:23.5px;background:#535353;"></div>
<svg style="left:427px;top:454px;" width="7" height="5" viewBox="0 0 7 5"><path d="M3.5 0.5 L1 2.5 L3.5 4.5 Z M6.5 0.5 L4 2.5 L6.5 4.5 Z" fill="#c8c8c8"/></svg>
<svg style="left:443px;top:453.5px;" width="6" height="6" viewBox="0 0 6 6"><path d="M0.5 0.5 L5.5 5.5 M5.5 0.5 L0.5 5.5" stroke="#cfcfcf" stroke-width="1.5"/></svg>
<svg style="left:141px;top:470px;" width="5" height="9" viewBox="0 0 5 9"><path d="M0.7 3.2 L2.5 1 L4.3 3.2 M0.7 5.8 L2.5 8 L4.3 5.8" stroke="#c8c8c8" stroke-width="0.9" fill="none"/></svg>
<div class="t" style="left:150.5px;top:469.5px;font-size:9.5px;color:#e6e6e6;font-weight:bold">Script Manager</div>
<div class="ab" style="left:136px;top:492.5px;width:251px;height:11px;background:#464646;border:1px solid #dcdcdc;border-width:1px 1px 1.5px 1px"></div>
<div class="ab" style="left:391px;top:488.5px;width:18px;height:18px;background:#e4e4e4;border:1px solid #f0f0f0"></div>
<div class="ab" style="left:396px;top:493.5px;width:8px;height:8px;background:#a8a8a8;"></div>
<div class="ab" style="left:413px;top:488.5px;width:18px;height:18px;background:#e4e4e4;border:1px solid #f0f0f0"></div>
<svg style="left:418px;top:492px;" width="8" height="11" viewBox="0 0 8 11"><path d="M0.5 0.5 L7.5 5.5 L0.5 10.5 Z" fill="#a8a8a8"/></svg>
<div class="ab" style="left:434px;top:488.5px;width:18.5px;height:18px;background:#e4e4e4;border:1px solid #f0f0f0"></div>
<svg style="left:438px;top:491px;" width="11" height="13" viewBox="0 0 11 13"><path d="M0 0.8 H9 M0 3.3 H9 M0 5.8 H9" stroke="#222" stroke-width="1.3"/><path d="M4 8 H11 L7.5 12 Z" fill="#000"/></svg>
<div class="ab" style="left:136px;top:510px;width:316px;height:254px;background:#e8ebee;"></div>
<div class="ab" style="left:136px;top:510px;width:316px;height:22px;background:#ffffff;"></div>
<div class="t dk" style="left:142.5px;top:516.5px;font-size:8.5px;color:#222;">Name</div>
<svg style="left:262px;top:512px;" width="7" height="4" viewBox="0 0 7 4"><path d="M0.5 3.5 L3.5 0.5 L6.5 3.5" stroke="#555" stroke-width="1" fill="none"/></svg>
<div class="t dk" style="left:404px;top:516.5px;font-size:8.5px;color:#222;">Type</div>
<div class="ab" style="left:398px;top:510px;width:1px;height:95px;background:#d8d8d8;"></div>
<div class="ab" style="left:136px;top:532px;width:316px;height:14.6px;background:#e4e7ea;"></div>
<div class="ab" style="left:136px;top:546px;width:316px;height:1px;background:#d3d6d9;"></div>
<div class="t dk" style="left:159.7px;top:535px;font-size:7.8px;color:#1a1a1a;">Auslesen Währung und Sprache</div>
<div class="t dk" style="left:402.2px;top:535px;font-size:7.8px;color:#1a1a1a;">LUA</div>
<div class="ab" style="left:136px;top:547px;width:316px;height:14.6px;background:#e4e7ea;"></div>
<div class="ab" style="left:136px;top:560px;width:316px;height:1px;background:#d3d6d9;"></div>
<div class="t dk" style="left:159.7px;top:550px;font-size:7.8px;color:#1a1a1a;">ExecuteGraphQLRESTRequest</div>
<div class="t dk" style="left:402.2px;top:550px;font-size:7.8px;color:#1a1a1a;">LUA</div>
<div class="ab" style="left:136px;top:561px;width:316px;height:14.6px;background:#e4e7ea;"></div>
<div class="ab" style="left:136px;top:575px;width:316px;height:1px;background:#d3d6d9;"></div>
<div class="t dk" style="left:159.7px;top:564px;font-size:7.8px;color:#1a1a1a;">Iterator über Artikel/Varianten eines Produkts anhand Center Sel.</div>
<div class="t dk" style="left:402.2px;top:564px;font-size:7.8px;color:#1a1a1a;">LUA</div>
<div class="ab" style="left:136px;top:576px;width:316px;height:14.6px;background:#e4e7ea;"></div>
<div class="ab" style="left:136px;top:589px;width:316px;height:1px;background:#d3d6d9;"></div>
<div class="t dk" style="left:159.7px;top:579px;font-size:7.8px;color:#1a1a1a;">Iterator über Produkte in Dokument FS24-01_01</div>
<div class="t dk" style="left:402.2px;top:579px;font-size:7.8px;color:#1a1a1a;">LUA</div>
<div class="ab" style="left:136px;top:590px;width:316px;height:14.6px;background:#e4e7ea;"></div>
<div class="ab" style="left:136px;top:604px;width:316px;height:1px;background:#d3d6d9;"></div>
<div class="t dk" style="left:159.7px;top:593px;font-size:7.8px;color:#1a1a1a;">Selektierte Produkte Platzieren</div>
<div class="t dk" style="left:402.2px;top:593px;font-size:7.8px;color:#1a1a1a;">LUA</div>
<div class="ab" style="left:398px;top:532px;width:1px;height:73px;background:#d3d6d9;"></div>
<div class="t" style="left:152.6px;top:765.5px;font-size:8.2px;color:#c8c8c8;">STOPP</div>
<div class="ab" style="left:135px;top:794px;width:318.5px;height:1px;background:#3e3e3e;"></div>
<div class="ab" style="left:135px;top:795px;width:318.5px;height:6px;background:#4e4e4e;"></div>
<svg style="left:284px;top:796px;" width="21" height="3" viewBox="0 0 21 3"><path d="M1 0V3M4 0V3M7 0V3M10 0V3M13 0V3M16 0V3M19 0V3" stroke="#3a3a3a"/></svg>
<div class="ab" style="left:1048.5px;top:104px;width:474px;height:569px;background:#535353;border:1px solid #3f3f3f;border-radius:3px 3px 0 0"></div>
<div class="ab" style="left:1048px;top:138px;width:3px;height:535px;background:#464646;"></div>
<div class="ab" style="left:1049px;top:104.5px;width:473px;height:11px;background:#474747;border-radius:3px 3px 0 0"></div>
<div class="ab" style="left:1049px;top:115.5px;width:473px;height:23px;background:#434343;"></div>
<div class="ab" style="left:1049px;top:115.5px;width:56px;height:23px;background:#535353;"></div>
<svg style="left:1495px;top:108px;" width="7" height="5" viewBox="0 0 7 5"><path d="M3.5 0.5 L1 2.5 L3.5 4.5 Z M6.5 0.5 L4 2.5 L6.5 4.5 Z" fill="#c8c8c8"/></svg>
<svg style="left:1512px;top:107.5px;" width="6" height="6" viewBox="0 0 6 6"><path d="M0.5 0.5 L5.5 5.5 M5.5 0.5 L0.5 5.5" stroke="#cfcfcf" stroke-width="1.5"/></svg>
<svg style="left:1055px;top:123px;" width="5" height="9" viewBox="0 0 5 9"><path d="M0.7 3.2 L2.5 1 L4.3 3.2 M0.7 5.8 L2.5 8 L4.3 5.8" stroke="#c8c8c8" stroke-width="0.9" fill="none"/></svg>
<div class="t" style="left:1065px;top:122.5px;font-size:9.4px;color:#e6e6e6;font-weight:bold">Center</div>
<div class="ab" style="left:1052.5px;top:148.5px;width:399px;height:12px;background:#464646;border:1px solid #dcdcdc;border-width:1.5px 1px 1.5px 1px"></div>
<div class="ab" style="left:1457px;top:145px;width:19px;height:19px;background:#e8e8e8;border:1px solid #222"></div>
<svg style="left:1460px;top:148px;" width="13" height="13" viewBox="0 0 13 13"><circle cx="5.5" cy="5.5" r="4" fill="none" stroke="#222" stroke-width="1.3"/><path d="M8.5 8.5 L12 12" stroke="#222" stroke-width="1.6"/></svg>
<div class="ab" style="left:1479px;top:145px;width:18.5px;height:19px;background:#e4e4e4;border:1px solid #f0f0f0"></div>
<svg style="left:1482px;top:148px;" width="13" height="12" viewBox="0 0 13 12"><rect x="0" y="0" width="3.5" height="3" fill="#222"/><rect x="9" y="0" width="3.5" height="3" fill="#222"/><rect x="0" y="8.5" width="3.5" height="3" fill="#222"/><path d="M3.5 1.5 H9 M3.5 1.5 L2 8.5" stroke="#222"/><path d="M6 7.5 H13 L9.5 11.5 Z" fill="#000"/></svg>
<div class="ab" style="left:1500.5px;top:145px;width:19px;height:19px;background:#e4e4e4;border:1px solid #f0f0f0"></div>
<svg style="left:1504px;top:148px;" width="12" height="13" viewBox="0 0 12 13"><path d="M0 0.8 H10 M0 3.3 H10 M0 5.8 H10" stroke="#222" stroke-width="1.3"/><path d="M4.5 8 H12 L8.2 12 Z" fill="#000"/></svg>
<div class="ab" style="left:1051px;top:167px;width:468px;height:215px;background:#ffffff;"></div>
<div class="ab" style="left:1051px;top:189px;width:453px;height:177px;background:#d7dbde;"></div>
<svg style="left:1066.0px;top:193.5px;" width="4" height="6" viewBox="0 0 4 6"><path d="M0 0 L3.5 3 L0 6 Z" fill="#111"/></svg>
<svg style="left:1075.0px;top:192.5px;" width="14" height="9" viewBox="0 0 14 9"><path d="M0 1.5 Q0 0 1.5 0 H4.5 L5.5 1 H12 V4 H0 Z" fill="#3a3a3a"/><rect x="1.5" y="2" width="10" height="1.3" fill="#e8e8e8"/><path d="M0 3.3 H13.5 L12.5 8.5 H0 Z" fill="#363636"/></svg>
<div class="t dk" style="left:1093.5px;top:193px;font-size:8px;color:#111;">Shootings</div>
<svg style="left:1066.0px;top:208.5px;" width="4" height="6" viewBox="0 0 4 6"><path d="M0 0 L3.5 3 L0 6 Z" fill="#111"/></svg>
<svg style="left:1075.0px;top:207.5px;" width="14" height="9" viewBox="0 0 14 9"><path d="M0 1.5 Q0 0 1.5 0 H4.5 L5.5 1 H12 V4 H0 Z" fill="#3a3a3a"/><rect x="1.5" y="2" width="10" height="1.3" fill="#e8e8e8"/><path d="M0 3.3 H13.5 L12.5 8.5 H0 Z" fill="#363636"/></svg>
<div class="t dk" style="left:1093.5px;top:208px;font-size:8px;color:#111;">E-Commerce</div>
<svg style="left:1063.5px;top:223.5px;" width="7" height="4" viewBox="0 0 7 4"><path d="M0 0 H6.5 L3.25 3.5 Z" fill="#111"/></svg>
<svg style="left:1075.0px;top:221.5px;" width="14" height="9" viewBox="0 0 14 9"><path d="M0 1.5 Q0 0 1.5 0 H4.5 L5.5 1 H12 V4 H0 Z" fill="#3a3a3a"/><rect x="1.5" y="2" width="10" height="1.3" fill="#e8e8e8"/><path d="M0 3.3 H13.5 L12.5 8.5 H0 Z" fill="#363636"/></svg>
<div class="t dk" style="left:1093.5px;top:222px;font-size:8px;color:#111;">Print</div>
<svg style="left:1072.1px;top:238.5px;" width="7" height="4" viewBox="0 0 7 4"><path d="M0 0 H6.5 L3.25 3.5 Z" fill="#111"/></svg>
<svg style="left:1083.6px;top:236.5px;" width="14" height="9" viewBox="0 0 14 9"><path d="M0 1.5 Q0 0 1.5 0 H4.5 L5.5 1 H12 V4 H0 Z" fill="#3a3a3a"/><rect x="1.5" y="2" width="10" height="1.3" fill="#e8e8e8"/><path d="M0 3.3 H13.5 L12.5 8.5 H0 Z" fill="#363636"/></svg>
<div class="t dk" style="left:1102.16px;top:237px;font-size:8px;color:#111;">FS2024</div>
<svg style="left:1080.7px;top:253.5px;" width="7" height="4" viewBox="0 0 7 4"><path d="M0 0 H6.5 L3.25 3.5 Z" fill="#111"/></svg>
<svg style="left:1092.2px;top:251.5px;" width="14" height="9" viewBox="0 0 14 9"><path d="M0 1.5 Q0 0 1.5 0 H4.5 L5.5 1 H12 V4 H0 Z" fill="#3a3a3a"/><rect x="1.5" y="2" width="10" height="1.3" fill="#e8e8e8"/><path d="M0 3.3 H13.5 L12.5 8.5 H0 Z" fill="#363636"/></svg>
<div class="t dk" style="left:1110.82px;top:252px;font-size:8px;color:#111;">Sample advertising media</div>
<svg style="left:1089.3px;top:268.5px;" width="7" height="4" viewBox="0 0 7 4"><path d="M0 0 H6.5 L3.25 3.5 Z" fill="#111"/></svg>
<svg style="left:1100.8px;top:266.5px;" width="14" height="9" viewBox="0 0 14 9"><path d="M0 1.5 Q0 0 1.5 0 H4.5 L5.5 1 H12 V4 H0 Z" fill="#3a3a3a"/><rect x="1.5" y="2" width="10" height="1.3" fill="#e8e8e8"/><path d="M0 3.3 H13.5 L12.5 8.5 H0 Z" fill="#363636"/></svg>
<div class="t dk" style="left:1119.48px;top:267px;font-size:8px;color:#111;">DE</div>
<svg style="left:1097.9px;top:283.5px;" width="7" height="4" viewBox="0 0 7 4"><path d="M0 0 H6.5 L3.25 3.5 Z" fill="#111"/></svg>
<svg style="left:1109.4px;top:281.5px;" width="14" height="9" viewBox="0 0 14 9"><path d="M0 1.5 Q0 0 1.5 0 H4.5 L5.5 1 H12 V4 H0 Z" fill="#3a3a3a"/><rect x="1.5" y="2" width="10" height="1.3" fill="#e8e8e8"/><path d="M0 3.3 H13.5 L12.5 8.5 H0 Z" fill="#363636"/></svg>
<div class="t dk" style="left:1128.14px;top:282px;font-size:8px;color:#111;">Document 1</div>
<svg style="left:1106.5px;top:297.5px;" width="7" height="4" viewBox="0 0 7 4"><path d="M0 0 H6.5 L3.25 3.5 Z" fill="#111"/></svg>
<svg style="left:1118.0px;top:295.5px;" width="14" height="9" viewBox="0 0 14 9"><path d="M0 1.5 Q0 0 1.5 0 H4.5 L5.5 1 H12 V4 H0 Z" fill="#3a3a3a"/><rect x="1.5" y="2" width="10" height="1.3" fill="#e8e8e8"/><path d="M0 3.3 H13.5 L12.5 8.5 H0 Z" fill="#363636"/></svg>
<div class="t dk" style="left:1136.8px;top:296px;font-size:8px;color:#111;">Bergkomfort Wanderstiefel 2.0</div>
<div class="ab" style="left:1051px;top:307px;width:453px;height:14.75px;background:#b4b8bb;"></div>
<svg style="left:1122px;top:308px;" width="9" height="13" viewBox="0 0 9 13"><path d="M0.5 0.5 H6 L8.5 3 V12.5 H0.5 Z" fill="#fff" stroke="#333"/><path d="M2 4.5 H7 M2 6.5 H7 M2 8.5 H7 M2 10.5 H7" stroke="#666" stroke-width="1"/></svg>
<div class="t dk" style="left:1138.4px;top:311px;font-size:8px;color:#111;">1095112</div>
<svg style="left:1109.0px;top:326.5px;" width="4" height="6" viewBox="0 0 4 6"><path d="M0 0 L3.5 3 L0 6 Z" fill="#111"/></svg>
<svg style="left:1118.0px;top:325.5px;" width="14" height="9" viewBox="0 0 14 9"><path d="M0 1.5 Q0 0 1.5 0 H4.5 L5.5 1 H12 V4 H0 Z" fill="#3a3a3a"/><rect x="1.5" y="2" width="10" height="1.3" fill="#e8e8e8"/><path d="M0 3.3 H13.5 L12.5 8.5 H0 Z" fill="#363636"/></svg>
<div class="t dk" style="left:1136.8px;top:326px;font-size:8px;color:#111;">Badeanzug mit abnehmbaren Trägern - 990EF1A309</div>
<svg style="left:1109.0px;top:340.5px;" width="4" height="6" viewBox="0 0 4 6"><path d="M0 0 L3.5 3 L0 6 Z" fill="#111"/></svg>
<svg style="left:1118.0px;top:339.5px;" width="14" height="9" viewBox="0 0 14 9"><path d="M0 1.5 Q0 0 1.5 0 H4.5 L5.5 1 H12 V4 H0 Z" fill="#3a3a3a"/><rect x="1.5" y="2" width="10" height="1.3" fill="#e8e8e8"/><path d="M0 3.3 H13.5 L12.5 8.5 H0 Z" fill="#363636"/></svg>
<div class="t dk" style="left:1136.8px;top:340px;font-size:8px;color:#111;">Badeanzug im Color-Block-Look - 050EF1A322</div>
<svg style="left:1109.0px;top:355.5px;" width="4" height="6" viewBox="0 0 4 6"><path d="M0 0 L3.5 3 L0 6 Z" fill="#111"/></svg>
<svg style="left:1118.0px;top:354.5px;" width="14" height="9" viewBox="0 0 14 9"><path d="M0 1.5 Q0 0 1.5 0 H4.5 L5.5 1 H12 V4 H0 Z" fill="#3a3a3a"/><rect x="1.5" y="2" width="10" height="1.3" fill="#e8e8e8"/><path d="M0 3.3 H13.5 L12.5 8.5 H0 Z" fill="#363636"/></svg>
<div class="t dk" style="left:1136.8px;top:355px;font-size:8px;color:#111;">Active-Top mit Netz-Details, E-DRY - 050EI1K303</div>
<div class="ab" style="left:1504px;top:167px;width:15px;height:199px;background:#f0f0f0;"></div>
<svg style="left:1507.5px;top:173px;" width="8" height="5" viewBox="0 0 8 5"><path d="M0.5 4.5 L4 1 L7.5 4.5" stroke="#333" stroke-width="1.2" fill="none"/></svg>
<div class="ab" style="left:1504px;top:183px;width:14px;height:103px;background:#cdcdcd;"></div>
<svg style="left:1507.5px;top:356px;" width="8" height="5" viewBox="0 0 8 5"><path d="M0.5 0.5 L4 4 L7.5 0.5" stroke="#333" stroke-width="1.2" fill="none"/></svg>
<div class="ab" style="left:1051px;top:366.5px;width:453px;height:15px;background:#f0f0f0;"></div>
<div class="ab" style="left:1067px;top:367.5px;width:410px;height:13px;background:#cdcdcd;"></div>
<svg style="left:1058px;top:370.5px;" width="5" height="8" viewBox="0 0 5 8"><path d="M4.5 0.5 L1 4 L4.5 7.5" stroke="#333" stroke-width="1.2" fill="none"/></svg>
<svg style="left:1493px;top:370.5px;" width="5" height="8" viewBox="0 0 5 8"><path d="M0.5 0.5 L4 4 L0.5 7.5" stroke="#333" stroke-width="1.2" fill="none"/></svg>
<div class="ab" style="left:1049px;top:382px;width:473px;height:13px;background:#535353;"></div>
<div class="ab" style="left:1049px;top:382px;width:473px;height:2px;background:#3c3c3c;"></div>
<div class="ab" style="left:1049px;top:385px;width:473px;height:1px;background:#c8c8c8;"></div>
<div class="ab" style="left:1049px;top:386px;width:473px;height:2px;background:#3c3c3c;"></div>
<div class="ab" style="left:1049px;top:388px;width:473px;height:1px;background:#c8c8c8;"></div>
<div class="ab" style="left:1049px;top:389px;width:473px;height:1px;background:#3c3c3c;"></div>
<div class="ab" style="left:1051px;top:395px;width:469px;height:253px;background:#f0f0f0;"></div>
<div class="ab" style="left:1050px;top:396px;width:47px;height:17px;background:#ffffff;"></div>
<div class="t dk" style="left:1058.7px;top:397.5px;font-size:8px;color:#111;">Anfragen</div>
<div class="t dk" style="left:1101px;top:400px;font-size:8px;color:#111;">Leuchttisch</div>
<div class="ab" style="left:1143px;top:398px;width:1px;height:14px;background:#d6d6d6;"></div>
<div class="t dk" style="left:1150px;top:400px;font-size:8px;color:#111;">Vorlagen</div>
<div class="ab" style="left:1186px;top:398px;width:1px;height:14px;background:#d6d6d6;"></div>
<div class="t dk" style="left:1192px;top:400px;font-size:8px;color:#111;">Snippets (0)</div>
<div class="ab" style="left:1239px;top:398px;width:1px;height:14px;background:#d6d6d6;"></div>
<div class="ab" style="left:1053px;top:412.5px;width:462.5px;height:22.5px;background:#535353;"></div>
<div class="ab" style="left:1053px;top:418px;width:435.5px;height:11px;background:#464646;border:1px solid #9a9a9a;border-right-color:#e8e8e8;border-bottom:1.5px solid #e8e8e8"></div>
<div class="ab" style="left:1494.5px;top:414px;width:18.5px;height:18.5px;background:#e8e8e8;border:1px solid #f4f4f4"></div>
<svg style="left:1499px;top:418px;" width="10" height="10" viewBox="0 0 10 10"><path d="M1 1 L9 9 M9 1 L1 9" stroke="#a0a0a0" stroke-width="1.6"/></svg>
<div class="ab" style="left:1053px;top:435px;width:462px;height:193.5px;background:#e8ebee;"></div>
<div class="ab" style="left:1053px;top:435px;width:447px;height:22.3px;background:#ffffff;"></div>
<div class="t dk" style="left:1059.7px;top:442.5px;font-size:8.3px;color:#222;">Name</div>
<div class="t dk" style="left:1214.5px;top:442.5px;font-size:8.3px;color:#222;">Inhalt</div>
<div class="ab" style="left:1208.4px;top:435px;width:1px;height:184px;background:#d6d9dc;"></div>
<div class="ab" style="left:1053px;top:457px;width:447px;height:14.7px;background:#e4e7ea;"></div>
<div class="ab" style="left:1053px;top:471px;width:447px;height:1px;background:#d3d6d9;"></div>
<div class="t dk" style="left:1077.3px;top:461px;font-size:8px;color:#111;">Attributes.acc_product_main_image</div>
<svg style="left:1214px;top:459px;" width="13" height="10" viewBox="0 0 13 10"><path d="M0.5 8 L3 3 L6 1 L10 2 L12.5 6 L11 9 H2 Z" fill="#444"/><path d="M3 5 H10 M3 7 H11" stroke="#aaa" stroke-width="0.7"/><path d="M0 0 L2 2" stroke="#444"/></svg>
<div class="t dk" style="left:1230.2px;top:461px;font-size:8px;color:#111;">1095112_Bergkomfort_dunkelgrau_p.jpg</div>
<div class="ab" style="left:1053px;top:472px;width:447px;height:14.7px;background:#e4e7ea;"></div>
<div class="ab" style="left:1053px;top:486px;width:447px;height:1px;background:#d3d6d9;"></div>
<div class="t dk" style="left:1077.3px;top:476px;font-size:8px;color:#111;">Attributes.acc_bulletpoint_1</div>
<div class="t dk" style="left:1215.6px;top:476px;width:284px;overflow:hidden;font-size:8px;color:#111">Tiefzughaken mit Stopp-Funktion für eine Schnürung, die hält</div>
<div class="ab" style="left:1053px;top:487px;width:447px;height:14.7px;background:#e4e7ea;"></div>
<div class="ab" style="left:1053px;top:500px;width:447px;height:1px;background:#d3d6d9;"></div>
<div class="t dk" style="left:1077.3px;top:491px;font-size:8px;color:#111;">Attributes.acc_bulletpoint_1_DH</div>
<div class="t dk" style="left:1215.6px;top:491px;width:284px;overflow:hidden;font-size:8px;color:#111">Tiefzughaken mit Stopp-Funktion für eine Schnürung, die hält</div>
<div class="ab" style="left:1053px;top:501px;width:447px;height:14.7px;background:#e4e7ea;"></div>
<div class="ab" style="left:1053px;top:515px;width:447px;height:1px;background:#d3d6d9;"></div>
<div class="t dk" style="left:1077.3px;top:505px;font-size:8px;color:#111;">Attributes.acc_bulletpoint_2</div>
<div class="t dk" style="left:1215.6px;top:505px;width:284px;overflow:hidden;font-size:8px;color:#111">Neue BÄR-FIRMOFLEX®-Technologie im Vorfußbereich</div>
<div class="ab" style="left:1053px;top:516px;width:447px;height:14.7px;background:#e4e7ea;"></div>
<div class="ab" style="left:1053px;top:530px;width:447px;height:1px;background:#d3d6d9;"></div>
<div class="t dk" style="left:1077.3px;top:520px;font-size:8px;color:#111;">Attributes.acc_bulletpoint_3</div>
<div class="t dk" style="left:1215.6px;top:520px;width:284px;overflow:hidden;font-size:8px;color:#111">Nachhaltiges, umweltbewusst produziertes terracare® Rindnubukleder</div>
<div class="ab" style="left:1053px;top:531px;width:447px;height:14.7px;background:#e4e7ea;"></div>
<div class="ab" style="left:1053px;top:545px;width:447px;height:1px;background:#d3d6d9;"></div>
<div class="t dk" style="left:1077.3px;top:535px;font-size:8px;color:#111;">Attributes.acc_bulletpoint_4</div>
<div class="t dk" style="left:1215.6px;top:535px;width:284px;overflow:hidden;font-size:8px;color:#111">Memory Foam Polsterung</div>
<div class="ab" style="left:1053px;top:546px;width:447px;height:14.7px;background:#e4e7ea;"></div>
<div class="ab" style="left:1053px;top:559px;width:447px;height:1px;background:#d3d6d9;"></div>
<div class="t dk" style="left:1077.3px;top:550px;font-size:8px;color:#111;">Attributes.acc_bulletpoint_5</div>
<div class="t dk" style="left:1215.6px;top:550px;width:284px;overflow:hidden;font-size:8px;color:#111">Speziell angeordnetes Profil für Grip bergauf und Halt bergab</div>
<div class="ab" style="left:1053px;top:560px;width:447px;height:14.7px;background:#e4e7ea;"></div>
<div class="ab" style="left:1053px;top:574px;width:447px;height:1px;background:#d3d6d9;"></div>
<div class="t dk" style="left:1077.3px;top:564px;font-size:8px;color:#111;">name</div>
<div class="t dk" style="left:1215.6px;top:564px;width:284px;overflow:hidden;font-size:8px;color:#111">Project_Print_19.03.2024_17:16:42</div>
<div class="ab" style="left:1053px;top:575px;width:447px;height:14.7px;background:#e4e7ea;"></div>
<div class="ab" style="left:1053px;top:589px;width:447px;height:1px;background:#d3d6d9;"></div>
<div class="t dk" style="left:1077.3px;top:579px;font-size:8px;color:#111;">ALLFILLEDATTRIBS</div>
<div class="t dk" style="left:1215.6px;top:579px;font-size:8px;color:#111;">{</div>
<div class="t dk" style="left:1229.7px;top:579px;font-size:8px;color:#111;">"tid": "7b7b1b0f-ede2-4747-a311-d05991446a9f",</div>
<div class="t dk" style="left:1415.4px;top:579px;width:84px;overflow:hidden;font-size:8px;color:#111">"name": "Project_Print_</div>
<div class="ab" style="left:1053px;top:590px;width:447px;height:14.7px;background:#b4b8bb;"></div>
<div class="ab" style="left:1053px;top:603px;width:447px;height:1px;background:#d3d6d9;"></div>
<div class="t dk" style="left:1077.3px;top:594px;font-size:8px;color:#111;">PEODATA</div>
<div class="t dk" style="left:1215.6px;top:594px;font-size:8px;color:#111;">{</div>
<div class="t dk" style="left:1229.7px;top:594px;font-size:8px;color:#111;">"meta": {</div>
<div class="t dk" style="left:1283.7px;top:594px;font-size:8px;color:#111;">"itm": [</div>
<div class="t dk" style="left:1341.3px;top:594px;font-size:8px;color:#111;">{</div>
<div class="t dk" style="left:1386px;top:594px;font-size:8px;color:#111;">"key": "messageType",</div>
<div class="ab" style="left:1053px;top:604px;width:447px;height:14.7px;background:#e4e7ea;"></div>
<div class="ab" style="left:1053px;top:618px;width:447px;height:1px;background:#d3d6d9;"></div>
<div class="t dk" style="left:1077.3px;top:608px;font-size:8px;color:#111;">HIERARCHY</div>
<div class="t dk" style="left:1215.6px;top:608px;width:284px;overflow:hidden;font-size:8px;color:#111">{}</div>
<div class="ab" style="left:1208.4px;top:457px;width:1px;height:162px;background:#d3d6d9;"></div>
<div class="ab" style="left:1500px;top:435px;width:15px;height:194px;background:#f0f0f0;"></div>
<svg style="left:1504px;top:443px;" width="8" height="5" viewBox="0 0 8 5"><path d="M0.5 4.5 L4 1 L7.5 4.5" stroke="#333" stroke-width="1.2" fill="none"/></svg>
<div class="ab" style="left:1500.5px;top:486px;width:13.5px;height:127px;background:#cdcdcd;"></div>
<svg style="left:1504px;top:619px;" width="8" height="5" viewBox="0 0 8 5"><path d="M0.5 0.5 L4 4 L7.5 0.5" stroke="#333" stroke-width="1.2" fill="none"/></svg>
<div class="ab" style="left:1053px;top:629px;width:447px;height:13px;background:#f0f0f0;"></div>
<div class="ab" style="left:1069px;top:629.5px;width:340px;height:12px;background:#cdcdcd;"></div>
<svg style="left:1060px;top:632px;" width="5" height="8" viewBox="0 0 5 8"><path d="M4.5 0.5 L1 4 L4.5 7.5" stroke="#333" stroke-width="1.2" fill="none"/></svg>
<svg style="left:1490px;top:632px;" width="5" height="8" viewBox="0 0 5 8"><path d="M0.5 0.5 L4 4 L0.5 7.5" stroke="#333" stroke-width="1.2" fill="none"/></svg>
<div class="ab" style="left:1049px;top:648px;width:473px;height:18px;background:#535353;"></div>
<div class="ab" style="left:1049px;top:666px;width:473px;height:1px;background:#3a3a3a;"></div>
<div class="ab" style="left:1049px;top:667px;width:473px;height:6px;background:#4e4e4e;"></div>
<svg style="left:1275px;top:668px;" width="21" height="3" viewBox="0 0 21 3"><path d="M1 0V3M4 0V3M7 0V3M10 0V3M13 0V3M16 0V3M19 0V3" stroke="#3a3a3a"/></svg>
<svg style="left:1038.5px;top:448px;" width="21" height="10" viewBox="0 0 21 10"><path d="M0.8 5 L4.8 0.8 V3.2 H16.2 V0.8 L20.2 5 L16.2 9.2 V6.8 H4.8 V9.2 Z" fill="#fff" stroke="#111" stroke-width="1.1"/><path d="M10.5 3.2V6.8" stroke="#333" stroke-width="2.5"/></svg>
<div class="ab" style="left:1130px;top:673px;width:180.5px;height:188px;background:#535353;border:1px solid #3f3f3f;border-top:none"></div>
<div class="ab" style="left:1136px;top:681px;width:166px;height:39px;border:1.5px solid #d8d8d8;border-radius:1px"></div>
<div class="ab" style="left:1140px;top:678px;width:38px;height:6px;background:#535353;"></div>
<div class="t dk" style="left:1143px;top:677.5px;font-size:8.2px;color:#151515;">Vorgang</div>
<div class="ab" style="left:1137.3px;top:730.5px;width:166.5px;height:39.5px;border:1.5px solid #d8d8d8;border-radius:1px"></div>
<div class="ab" style="left:1141.3px;top:727.5px;width:80px;height:6px;background:#535353;"></div>
<div class="t dk" style="left:1144.3px;top:727.0px;font-size:8.2px;color:#151515;">Warnungen / Fehler</div>
<div class="t" style="left:1147px;top:748.5px;font-size:8.2px;color:#bdbdbd;">0 / 0</div>
<div class="ab" style="left:1137.3px;top:779px;width:166.5px;height:56px;border:1.5px solid #d8d8d8;border-radius:1px"></div>
<div class="ab" style="left:1141.3px;top:776px;width:42px;height:6px;background:#535353;"></div>
<div class="t dk" style="left:1144.3px;top:775.5px;font-size:8.2px;color:#151515;">Fortschritt</div>
<div class="ab" style="left:1131px;top:854.5px;width:179px;height:1px;background:#3e3e3e;"></div>
<div class="ab" style="left:1131px;top:855.5px;width:179px;height:5.5px;background:#4e4e4e;"></div>
<svg style="left:1210px;top:856.5px;" width="21" height="3" viewBox="0 0 21 3"><path d="M1 0V3M4 0V3M7 0V3M10 0V3M13 0V3M16 0V3M19 0V3" stroke="#3a3a3a"/></svg>
</body></html>
